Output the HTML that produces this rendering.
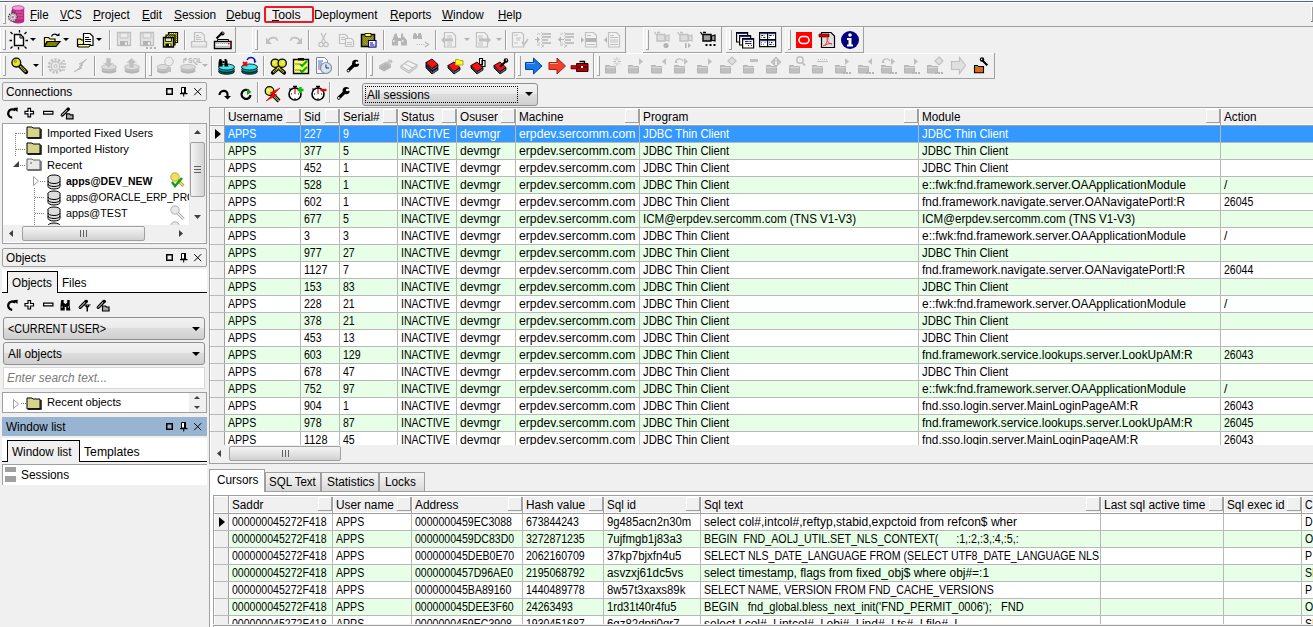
<!DOCTYPE html><html><head><meta charset="utf-8"><style>
html,body{margin:0;padding:0;}
body{width:1313px;height:627px;overflow:hidden;position:relative;background:#f0f0f0;font-family:"Liberation Sans",sans-serif;}
.t{position:absolute;white-space:pre;font-family:"Liberation Sans",sans-serif;}
.b{position:absolute;box-sizing:border-box;}
.ic{position:absolute;overflow:visible;}
.clip{position:absolute;overflow:hidden;}
u{text-decoration:none;border-bottom:1px solid #000;}
</style></head><body>
<div class="b" style="left:0px;top:0px;width:1313px;height:1px;background:#f4f6f9"></div>
<div class="b" style="left:0px;top:1px;width:1313px;height:1px;background:#5a6470"></div>
<div class="b" style="left:0px;top:2px;width:1313px;height:1px;background:#ffffff"></div>
<div class="b" style="left:3px;top:5px;width:1px;height:18px;background:#fff"></div>
<div class="b" style="left:5px;top:5px;width:1px;height:18px;background:#a0a0a0"></div>
<div class="b" style="left:3px;top:23px;width:3px;height:1px;background:#a0a0a0"></div>
<svg class="ic" style="left:7px;top:5px;width:19px;height:18px" viewBox="0 0 19 18"><path d="M5 3v13a6 2.5 0 0 0 12.2 0V3z" fill="#c02880"/><ellipse cx="11.1" cy="3" rx="6.1" ry="2.3" fill="#e8a0d8" stroke="#b02070" stroke-width=".6"/><path d="M9 7h7M9 10h7M9 13h7" stroke="#e060b0" stroke-width="1"/><path d="M5 5v11" stroke="#901060" stroke-width="1"/><circle cx="5.8" cy="12.1" r="4.2" fill="#e8e8e8" stroke="#404040" stroke-width="1.4" stroke-dasharray="1.5 1"/><circle cx="5.8" cy="12.1" r="2.8" fill="#e0e0e0" stroke="#808080" stroke-width=".6"/><circle cx="5.8" cy="12.1" r="1.2" fill="#e050a0"/></svg>
<div class="t" style="left:30px;top:7px;font-size:12px;line-height:16px;color:#000;transform:scaleX(0.961);transform-origin:0 0;">File</div>
<div class="t" style="left:60px;top:7px;font-size:12px;line-height:16px;color:#000;transform:scaleX(0.880);transform-origin:0 0;">VCS</div>
<div class="t" style="left:93px;top:7px;font-size:12px;line-height:16px;color:#000;transform:scaleX(0.982);transform-origin:0 0;">Project</div>
<div class="t" style="left:142px;top:7px;font-size:12px;line-height:16px;color:#000;transform:scaleX(0.960);transform-origin:0 0;">Edit</div>
<div class="t" style="left:174px;top:7px;font-size:12px;line-height:16px;color:#000;transform:scaleX(0.986);transform-origin:0 0;">Session</div>
<div class="t" style="left:226px;top:7px;font-size:12px;line-height:16px;color:#000;transform:scaleX(0.978);transform-origin:0 0;">Debug</div>
<div class="t" style="left:272px;top:7px;font-size:12px;line-height:16px;color:#000;transform:scaleX(1.024);transform-origin:0 0;">Tools</div>
<div class="t" style="left:314px;top:7px;font-size:12px;line-height:16px;color:#000;transform:scaleX(0.992);transform-origin:0 0;">Deployment</div>
<div class="t" style="left:390px;top:7px;font-size:12px;line-height:16px;color:#000;transform:scaleX(0.983);transform-origin:0 0;">Reports</div>
<div class="t" style="left:442px;top:7px;font-size:12px;line-height:16px;color:#000;transform:scaleX(0.975);transform-origin:0 0;">Window</div>
<div class="t" style="left:498px;top:7px;font-size:12px;line-height:16px;color:#000;transform:scaleX(0.964);transform-origin:0 0;">Help</div>
<div class="b" style="left:30px;top:20px;width:7px;height:1px;background:#000"></div>
<div class="b" style="left:60px;top:20px;width:8px;height:1px;background:#000"></div>
<div class="b" style="left:93px;top:20px;width:8px;height:1px;background:#000"></div>
<div class="b" style="left:142px;top:20px;width:8px;height:1px;background:#000"></div>
<div class="b" style="left:174px;top:20px;width:8px;height:1px;background:#000"></div>
<div class="b" style="left:226px;top:20px;width:9px;height:1px;background:#000"></div>
<div class="b" style="left:272px;top:20px;width:7px;height:1px;background:#000"></div>
<div class="b" style="left:390px;top:20px;width:9px;height:1px;background:#000"></div>
<div class="b" style="left:442px;top:20px;width:11px;height:1px;background:#000"></div>
<div class="b" style="left:498px;top:20px;width:9px;height:1px;background:#000"></div>
<div class="b" style="left:264px;top:6px;width:50px;height:17px;border:2.6px solid #ee1822;border-radius:2px"></div>
<div class="b" style="left:1311px;top:7px;width:1px;height:14px;background:#fff"></div>
<div class="b" style="left:1312px;top:7px;width:1px;height:14px;background:#a0a0a0"></div>
<div class="b" style="left:1311px;top:21px;width:2px;height:1px;background:#808080"></div>
<div class="b" style="left:0px;top:26px;width:1313px;height:1px;background:#a0a0a0"></div>
<div class="b" style="left:0px;top:27px;width:235px;height:1px;background:#fff"></div>
<div class="b" style="left:0px;top:27px;width:1px;height:25px;background:#fff"></div>
<div class="b" style="left:0px;top:52px;width:236px;height:1px;background:#a0a0a0"></div>
<div class="b" style="left:235px;top:27px;width:1px;height:25px;background:#a0a0a0"></div>
<div class="b" style="left:252px;top:27px;width:373px;height:1px;background:#fff"></div>
<div class="b" style="left:252px;top:27px;width:1px;height:25px;background:#fff"></div>
<div class="b" style="left:252px;top:52px;width:374px;height:1px;background:#a0a0a0"></div>
<div class="b" style="left:625px;top:27px;width:1px;height:25px;background:#a0a0a0"></div>
<div class="b" style="left:643px;top:27px;width:78px;height:1px;background:#fff"></div>
<div class="b" style="left:643px;top:27px;width:1px;height:25px;background:#fff"></div>
<div class="b" style="left:643px;top:52px;width:79px;height:1px;background:#a0a0a0"></div>
<div class="b" style="left:721px;top:27px;width:1px;height:25px;background:#a0a0a0"></div>
<div class="b" style="left:726px;top:27px;width:55px;height:1px;background:#fff"></div>
<div class="b" style="left:726px;top:27px;width:1px;height:25px;background:#fff"></div>
<div class="b" style="left:726px;top:52px;width:56px;height:1px;background:#a0a0a0"></div>
<div class="b" style="left:781px;top:27px;width:1px;height:25px;background:#a0a0a0"></div>
<div class="b" style="left:785px;top:27px;width:78px;height:1px;background:#fff"></div>
<div class="b" style="left:785px;top:27px;width:1px;height:25px;background:#fff"></div>
<div class="b" style="left:785px;top:52px;width:79px;height:1px;background:#a0a0a0"></div>
<div class="b" style="left:863px;top:27px;width:1px;height:25px;background:#a0a0a0"></div>
<div class="b" style="left:3px;top:30px;width:1px;height:19px;background:#fff"></div>
<div class="b" style="left:5px;top:30px;width:1px;height:19px;background:#a0a0a0"></div>
<div class="b" style="left:3px;top:49px;width:3px;height:1px;background:#a0a0a0"></div>
<div class="b" style="left:255px;top:30px;width:1px;height:19px;background:#fff"></div>
<div class="b" style="left:257px;top:30px;width:1px;height:19px;background:#a0a0a0"></div>
<div class="b" style="left:255px;top:49px;width:3px;height:1px;background:#a0a0a0"></div>
<div class="b" style="left:646px;top:30px;width:1px;height:19px;background:#fff"></div>
<div class="b" style="left:648px;top:30px;width:1px;height:19px;background:#a0a0a0"></div>
<div class="b" style="left:646px;top:49px;width:3px;height:1px;background:#a0a0a0"></div>
<div class="b" style="left:729px;top:30px;width:1px;height:19px;background:#fff"></div>
<div class="b" style="left:731px;top:30px;width:1px;height:19px;background:#a0a0a0"></div>
<div class="b" style="left:729px;top:49px;width:3px;height:1px;background:#a0a0a0"></div>
<div class="b" style="left:788px;top:30px;width:1px;height:19px;background:#fff"></div>
<div class="b" style="left:790px;top:30px;width:1px;height:19px;background:#a0a0a0"></div>
<div class="b" style="left:788px;top:49px;width:3px;height:1px;background:#a0a0a0"></div>
<div class="b" style="left:109px;top:30px;width:1px;height:20px;background:#a0a0a0"></div>
<div class="b" style="left:110px;top:30px;width:1px;height:20px;background:#fff"></div>
<div class="b" style="left:184px;top:30px;width:1px;height:20px;background:#a0a0a0"></div>
<div class="b" style="left:185px;top:30px;width:1px;height:20px;background:#fff"></div>
<div class="b" style="left:308px;top:30px;width:1px;height:20px;background:#a0a0a0"></div>
<div class="b" style="left:309px;top:30px;width:1px;height:20px;background:#fff"></div>
<div class="b" style="left:383px;top:30px;width:1px;height:20px;background:#a0a0a0"></div>
<div class="b" style="left:384px;top:30px;width:1px;height:20px;background:#fff"></div>
<div class="b" style="left:435px;top:30px;width:1px;height:20px;background:#a0a0a0"></div>
<div class="b" style="left:436px;top:30px;width:1px;height:20px;background:#fff"></div>
<div class="b" style="left:505px;top:30px;width:1px;height:20px;background:#a0a0a0"></div>
<div class="b" style="left:506px;top:30px;width:1px;height:20px;background:#fff"></div>
<div class="b" style="left:0px;top:53px;width:145px;height:1px;background:#fff"></div>
<div class="b" style="left:0px;top:53px;width:1px;height:25px;background:#fff"></div>
<div class="b" style="left:0px;top:78px;width:146px;height:1px;background:#a0a0a0"></div>
<div class="b" style="left:145px;top:53px;width:1px;height:25px;background:#a0a0a0"></div>
<div class="b" style="left:146px;top:53px;width:220px;height:1px;background:#fff"></div>
<div class="b" style="left:146px;top:53px;width:1px;height:25px;background:#fff"></div>
<div class="b" style="left:146px;top:78px;width:221px;height:1px;background:#a0a0a0"></div>
<div class="b" style="left:366px;top:53px;width:1px;height:25px;background:#a0a0a0"></div>
<div class="b" style="left:367px;top:53px;width:147px;height:1px;background:#fff"></div>
<div class="b" style="left:367px;top:53px;width:1px;height:25px;background:#fff"></div>
<div class="b" style="left:367px;top:78px;width:148px;height:1px;background:#a0a0a0"></div>
<div class="b" style="left:514px;top:53px;width:1px;height:25px;background:#a0a0a0"></div>
<div class="b" style="left:516px;top:53px;width:77px;height:1px;background:#fff"></div>
<div class="b" style="left:516px;top:53px;width:1px;height:25px;background:#fff"></div>
<div class="b" style="left:516px;top:78px;width:78px;height:1px;background:#a0a0a0"></div>
<div class="b" style="left:593px;top:53px;width:1px;height:25px;background:#a0a0a0"></div>
<div class="b" style="left:594px;top:53px;width:400px;height:1px;background:#fff"></div>
<div class="b" style="left:594px;top:53px;width:1px;height:25px;background:#fff"></div>
<div class="b" style="left:594px;top:78px;width:401px;height:1px;background:#a0a0a0"></div>
<div class="b" style="left:994px;top:53px;width:1px;height:25px;background:#a0a0a0"></div>
<div class="b" style="left:3px;top:56px;width:1px;height:19px;background:#fff"></div>
<div class="b" style="left:5px;top:56px;width:1px;height:19px;background:#a0a0a0"></div>
<div class="b" style="left:3px;top:75px;width:3px;height:1px;background:#a0a0a0"></div>
<div class="b" style="left:149px;top:56px;width:1px;height:19px;background:#fff"></div>
<div class="b" style="left:151px;top:56px;width:1px;height:19px;background:#a0a0a0"></div>
<div class="b" style="left:149px;top:75px;width:3px;height:1px;background:#a0a0a0"></div>
<div class="b" style="left:370px;top:56px;width:1px;height:19px;background:#fff"></div>
<div class="b" style="left:372px;top:56px;width:1px;height:19px;background:#a0a0a0"></div>
<div class="b" style="left:370px;top:75px;width:3px;height:1px;background:#a0a0a0"></div>
<div class="b" style="left:518px;top:56px;width:1px;height:19px;background:#fff"></div>
<div class="b" style="left:520px;top:56px;width:1px;height:19px;background:#a0a0a0"></div>
<div class="b" style="left:518px;top:75px;width:3px;height:1px;background:#a0a0a0"></div>
<div class="b" style="left:597px;top:56px;width:1px;height:19px;background:#fff"></div>
<div class="b" style="left:599px;top:56px;width:1px;height:19px;background:#a0a0a0"></div>
<div class="b" style="left:597px;top:75px;width:3px;height:1px;background:#a0a0a0"></div>
<div class="b" style="left:42px;top:56px;width:1px;height:20px;background:#a0a0a0"></div>
<div class="b" style="left:43px;top:56px;width:1px;height:20px;background:#fff"></div>
<div class="b" style="left:94px;top:56px;width:1px;height:20px;background:#a0a0a0"></div>
<div class="b" style="left:95px;top:56px;width:1px;height:20px;background:#fff"></div>
<div class="b" style="left:211px;top:56px;width:1px;height:20px;background:#a0a0a0"></div>
<div class="b" style="left:212px;top:56px;width:1px;height:20px;background:#fff"></div>
<div class="b" style="left:263px;top:56px;width:1px;height:20px;background:#a0a0a0"></div>
<div class="b" style="left:264px;top:56px;width:1px;height:20px;background:#fff"></div>
<div class="b" style="left:338px;top:56px;width:1px;height:20px;background:#a0a0a0"></div>
<div class="b" style="left:339px;top:56px;width:1px;height:20px;background:#fff"></div>
<div class="b" style="left:2px;top:82px;width:205px;height:19px;border:1px solid #a0a0a0;border-radius:2px;background:#f0f0f0"></div>
<div class="t" style="left:6px;top:84px;font-size:12px;line-height:16px;color:#000;transform:scaleX(0.993);transform-origin:0 0;">Connections</div>
<svg class="ic" style="left:160px;top:82px;width:50px;height:19px" viewBox="0 0 50 19"><rect x="6.75" y="6.75" width="5.5" height="5.5" fill="none" stroke="#000" stroke-width="1.5"/><path d="M21.5 5.5h4v5.5h-4z" fill="#fff" stroke="#000"/><path d="M24 5h2v6.5h-2z" fill="#000"/><path d="M20 11.6h7.5" stroke="#000" stroke-width="1.3"/><path d="M23.7 12v2.5" stroke="#000" stroke-width="1"/><path d="M34.2 6.2l7 7M41.2 6.2l-7 7" stroke="#000" stroke-width="1"/></svg>
<div class="b" style="left:2px;top:123px;width:205px;height:121px;border:1px solid #a0a0a0;background:#fff"></div>
<div class="clip" style="left:3px;top:124px;width:186px;height:102px">
<div class="b" style="left:12px;top:9px;width:1px;height:23px;background:repeating-linear-gradient(180deg,#808080 0 1px,transparent 1px 2px)"></div>
<div class="b" style="left:13px;top:9px;width:10px;height:1px;background:repeating-linear-gradient(90deg,#808080 0 1px,transparent 1px 2px)"></div>
<div class="b" style="left:13px;top:25px;width:10px;height:1px;background:repeating-linear-gradient(90deg,#808080 0 1px,transparent 1px 2px)"></div>
<svg class="ic" style="left:23px;top:0px;width:16px;height:16px" viewBox="0 0 16 16"><path d="M1 3h5l1 1h7v10H1z" fill="#d4d48c" stroke="#000" stroke-width="1"/><path d="M2 14h13V5" fill="none" stroke="#000" stroke-width="1.4"/></svg>
<div class="t" style="left:44px;top:2px;font-size:11.3px;line-height:15px;color:#000;transform:scaleX(0.983);transform-origin:0 0;">Imported Fixed Users</div>
<svg class="ic" style="left:23px;top:16px;width:16px;height:16px" viewBox="0 0 16 16"><path d="M1 3h5l1 1h7v10H1z" fill="#d4d48c" stroke="#000" stroke-width="1"/><path d="M2 14h13V5" fill="none" stroke="#000" stroke-width="1.4"/></svg>
<div class="t" style="left:44px;top:18px;font-size:11.3px;line-height:15px;color:#000;transform:scaleX(0.989);transform-origin:0 0;">Imported History</div>
<svg class="ic" style="left:10px;top:37px;width:6px;height:6px" viewBox="0 0 6 6"><path d="M6 0v6H0z" fill="#404040"/></svg>
<div class="b" style="left:17px;top:41px;width:6px;height:1px;background:repeating-linear-gradient(90deg,#808080 0 1px,transparent 1px 2px)"></div>
<svg class="ic" style="left:23px;top:32px;width:16px;height:16px" viewBox="0 0 16 16"><path d="M1 3h5l1 1h7v10H1z" fill="#e8e8e8" stroke="#606060" stroke-width="1"/><path d="M2 14h13V5" fill="none" stroke="#606060" stroke-width="1.4"/><path d="M4 6l2 2M6 6L4 8" stroke="#888" stroke-width=".7"/></svg>
<div class="t" style="left:44px;top:34px;font-size:11.3px;line-height:15px;color:#000;transform:scaleX(0.980);transform-origin:0 0;">Recent</div>
<svg class="ic" style="left:30px;top:52px;width:6px;height:10px" viewBox="0 0 6 10"><path d="M0.5 0.5l5 4.5-5 4.5z" fill="#fff" stroke="#a0a0a0"/></svg>
<div class="b" style="left:37px;top:57px;width:5px;height:1px;background:repeating-linear-gradient(90deg,#808080 0 1px,transparent 1px 2px)"></div>
<svg class="ic" style="left:44px;top:50px;width:14px;height:16px" viewBox="0 0 14 16"><ellipse cx="7" cy="3.5" rx="6" ry="2.5" fill="#ddd" stroke="#000"/><path d="M1 3.5v9a6 2.5 0 0 0 12 0v-9" fill="#ddd" stroke="#000"/><path d="M1 7a6 2.5 0 0 0 12 0M1 10a6 2.5 0 0 0 12 0" fill="none" stroke="#000"/></svg>
<div class="t" style="left:63px;top:50px;font-size:11.3px;line-height:15px;color:#000;font-weight:bold;transform:scaleX(0.926);transform-origin:0 0;">apps@DEV_NEW</div>
<div class="b" style="left:31px;top:64px;width:1px;height:40px;background:repeating-linear-gradient(180deg,#808080 0 1px,transparent 1px 2px)"></div>
<div class="b" style="left:32px;top:73px;width:10px;height:1px;background:repeating-linear-gradient(90deg,#808080 0 1px,transparent 1px 2px)"></div>
<svg class="ic" style="left:44px;top:66px;width:14px;height:16px" viewBox="0 0 14 16"><ellipse cx="7" cy="3.5" rx="6" ry="2.5" fill="#ddd" stroke="#000"/><path d="M1 3.5v9a6 2.5 0 0 0 12 0v-9" fill="#ddd" stroke="#000"/><path d="M1 7a6 2.5 0 0 0 12 0M1 10a6 2.5 0 0 0 12 0" fill="none" stroke="#000"/></svg>
<div class="t" style="left:63px;top:66px;font-size:11.3px;line-height:15px;color:#000;transform:scaleX(0.904);transform-origin:0 0;">apps@ORACLE_ERP_PROD</div>
<div class="b" style="left:32px;top:89px;width:10px;height:1px;background:repeating-linear-gradient(90deg,#808080 0 1px,transparent 1px 2px)"></div>
<svg class="ic" style="left:44px;top:82px;width:14px;height:16px" viewBox="0 0 14 16"><ellipse cx="7" cy="3.5" rx="6" ry="2.5" fill="#ddd" stroke="#000"/><path d="M1 3.5v9a6 2.5 0 0 0 12 0v-9" fill="#ddd" stroke="#000"/><path d="M1 7a6 2.5 0 0 0 12 0M1 10a6 2.5 0 0 0 12 0" fill="none" stroke="#000"/></svg>
<div class="t" style="left:63px;top:82px;font-size:11.3px;line-height:15px;color:#000;transform:scaleX(0.950);transform-origin:0 0;">apps@TEST</div>
<svg class="ic" style="left:44px;top:98px;width:14px;height:16px" viewBox="0 0 14 16"><ellipse cx="7" cy="3.5" rx="6" ry="2.5" fill="#ddd" stroke="#000"/><path d="M1 3.5v9a6 2.5 0 0 0 12 0v-9" fill="#ddd" stroke="#000"/><path d="M1 7a6 2.5 0 0 0 12 0M1 10a6 2.5 0 0 0 12 0" fill="none" stroke="#000"/></svg>
<svg class="ic" style="left:167px;top:48px;width:16px;height:16px" viewBox="0 0 16 16"><circle cx="5" cy="5" r="4.2" fill="#f0e060" stroke="#b09020" stroke-width=".8"/><path d="M7.5 8l6 6" stroke="#b09020" stroke-width="3"/><path d="M7.5 8l6 6" stroke="#f0e060" stroke-width="1.6"/><path d="M2 10l3 4 7-8" fill="none" stroke="#10a010" stroke-width="2.4"/></svg>
<svg class="ic" style="left:167px;top:81px;width:16px;height:16px" viewBox="0 0 16 16"><circle cx="5" cy="5" r="4.2" fill="#e8e8e8" stroke="#a0a0a0" stroke-width=".8"/><path d="M7.5 8l6 6" stroke="#a0a0a0" stroke-width="3"/><path d="M7.5 8l6 6" stroke="#e8e8e8" stroke-width="1.6"/></svg>
<svg class="ic" style="left:167px;top:97px;width:16px;height:16px" viewBox="0 0 16 16"><circle cx="5" cy="5" r="4.2" fill="#e8e8e8" stroke="#a0a0a0" stroke-width=".8"/></svg>
</div>
<div class="b" style="left:189px;top:124px;width:17px;height:101px;background:#f0f0f0;border-left:1px solid #e8e8e8"></div>
<svg class="ic" style="left:194px;top:130px;width:7px;height:4px" viewBox="0 0 7 4"><path d="M3.5 0L7 4H0z" fill="#404040"/></svg>
<svg class="ic" style="left:194px;top:215px;width:7px;height:4px" viewBox="0 0 7 4"><path d="M0 0h7L3.5 4z" fill="#404040"/></svg>
<div class="b" style="left:190px;top:142px;width:15px;height:55px;border:1px solid #a0a0a0;border-radius:2px;background:linear-gradient(90deg,#f4f4f4,#e0e0e0 60%,#d4d4d4)"></div>
<div class="b" style="left:194px;top:166px;width:7px;height:1px;background:#606060"></div>
<div class="b" style="left:194px;top:169px;width:7px;height:1px;background:#606060"></div>
<div class="b" style="left:194px;top:172px;width:7px;height:1px;background:#606060"></div>
<div class="b" style="left:3px;top:225px;width:186px;height:17px;background:#f0f0f0"></div>
<svg class="ic" style="left:9px;top:230px;width:4px;height:7px" viewBox="0 0 4 7"><path d="M0 3.5L4 0v7z" fill="#404040"/></svg>
<svg class="ic" style="left:179px;top:230px;width:4px;height:7px" viewBox="0 0 4 7"><path d="M4 3.5L0 0v7z" fill="#404040"/></svg>
<div class="b" style="left:22px;top:226px;width:123px;height:15px;border:1px solid #a0a0a0;border-radius:2px;background:linear-gradient(180deg,#f4f4f4,#e0e0e0 60%,#d0d0d0)"></div>
<div class="b" style="left:80px;top:230px;width:1px;height:7px;background:#606060"></div>
<div class="b" style="left:83px;top:230px;width:1px;height:7px;background:#606060"></div>
<div class="b" style="left:86px;top:230px;width:1px;height:7px;background:#606060"></div>
<div class="b" style="left:189px;top:225px;width:17px;height:17px;background:#f0f0f0"></div>
<div class="b" style="left:2px;top:248px;width:205px;height:19px;border:1px solid #a0a0a0;border-radius:2px;background:#f0f0f0"></div>
<div class="t" style="left:6px;top:250px;font-size:12px;line-height:16px;color:#000;transform:scaleX(0.980);transform-origin:0 0;">Objects</div>
<svg class="ic" style="left:160px;top:248px;width:50px;height:19px" viewBox="0 0 50 19"><rect x="6.75" y="6.75" width="5.5" height="5.5" fill="none" stroke="#000" stroke-width="1.5"/><path d="M21.5 5.5h4v5.5h-4z" fill="#fff" stroke="#000"/><path d="M24 5h2v6.5h-2z" fill="#000"/><path d="M20 11.6h7.5" stroke="#000" stroke-width="1.3"/><path d="M23.7 12v2.5" stroke="#000" stroke-width="1"/><path d="M34.2 6.2l7 7M41.2 6.2l-7 7" stroke="#000" stroke-width="1"/></svg>
<div class="b" style="left:2px;top:269px;width:205px;height:24px;background:#fff"></div>
<div class="b" style="left:2px;top:292px;width:205px;height:1px;background:#000"></div>
<div class="b" style="left:7px;top:271px;width:51px;height:22px;border:1px solid #000;border-bottom:none;background:#f0f0f0"></div>
<div class="t" style="left:12px;top:275px;font-size:12px;line-height:16px;color:#000;transform:scaleX(0.980);transform-origin:0 0;">Objects</div>
<div class="t" style="left:62px;top:275px;font-size:12px;line-height:16px;color:#000;transform:scaleX(0.972);transform-origin:0 0;">Files</div>
<div class="b" style="left:3px;top:317px;width:202px;height:23px;border:1px solid #8e8f8f;border-radius:3px;background:linear-gradient(180deg,#f2f2f2 0%,#ebebeb 45%,#dddddd 50%,#cfcfcf 100%)"></div>
<div class="t" style="left:8px;top:321px;font-size:12px;line-height:16px;color:#000;transform:scaleX(0.898);transform-origin:0 0;">&lt;CURRENT USER&gt;</div>
<svg class="ic" style="left:192px;top:327px;width:8px;height:4px" viewBox="0 0 8 4"><path d="M0 0h8L4 4z" fill="#000"/></svg>
<div class="b" style="left:3px;top:342px;width:202px;height:23px;border:1px solid #8e8f8f;border-radius:3px;background:linear-gradient(180deg,#f2f2f2 0%,#ebebeb 45%,#dddddd 50%,#cfcfcf 100%)"></div>
<div class="t" style="left:8px;top:346px;font-size:12px;line-height:16px;color:#000;transform:scaleX(0.985);transform-origin:0 0;">All objects</div>
<svg class="ic" style="left:192px;top:352px;width:8px;height:4px" viewBox="0 0 8 4"><path d="M0 0h8L4 4z" fill="#000"/></svg>
<div class="b" style="left:3px;top:367px;width:202px;height:22px;border:1px solid #d8d8d8;background:#fff"></div>
<div class="t" style="left:7px;top:370px;font-size:12px;line-height:16px;color:#7a7a7a;font-style:italic;transform:scaleX(0.993);transform-origin:0 0;">Enter search text...</div>
<div class="b" style="left:2px;top:392px;width:205px;height:21px;border:1px solid #a0a0a0;background:#fff"></div>
<svg class="ic" style="left:13px;top:399px;width:6px;height:10px" viewBox="0 0 6 10"><path d="M0.5 0.5l5 4.5-5 4.5z" fill="#fff" stroke="#a0a0a0"/></svg>
<div class="b" style="left:21px;top:403px;width:5px;height:1px;background:repeating-linear-gradient(90deg,#808080 0 1px,transparent 1px 2px)"></div>
<svg class="ic" style="left:26px;top:395px;width:16px;height:16px" viewBox="0 0 16 16"><path d="M1 3h5l1 1h7v10H1z" fill="#d4d48c" stroke="#000" stroke-width="1"/><path d="M2 14h13V5" fill="none" stroke="#000" stroke-width="1.4"/></svg>
<div class="t" style="left:47px;top:395px;font-size:11.3px;line-height:15px;color:#000;transform:scaleX(0.992);transform-origin:0 0;">Recent objects</div>
<div class="b" style="left:189px;top:393px;width:17px;height:19px;background:#f0f0f0"></div>
<svg class="ic" style="left:194px;top:396px;width:6px;height:3px" viewBox="0 0 6 3"><path d="M3 0L6 3H0z" fill="#404040"/></svg>
<svg class="ic" style="left:194px;top:406px;width:6px;height:3px" viewBox="0 0 6 3"><path d="M0 0h6L3 3z" fill="#404040"/></svg>
<div class="b" style="left:2px;top:417px;width:205px;height:19px;background:#99b4d1"></div>
<div class="t" style="left:6px;top:419px;font-size:12px;line-height:16px;color:#000;transform:scaleX(0.981);transform-origin:0 0;">Window list</div>
<svg class="ic" style="left:160px;top:417px;width:50px;height:19px" viewBox="0 0 50 19"><rect x="6.75" y="6.75" width="5.5" height="5.5" fill="none" stroke="#000" stroke-width="1.5"/><path d="M21.5 5.5h4v5.5h-4z" fill="#fff" stroke="#000"/><path d="M24 5h2v6.5h-2z" fill="#000"/><path d="M20 11.6h7.5" stroke="#000" stroke-width="1.3"/><path d="M23.7 12v2.5" stroke="#000" stroke-width="1"/><path d="M34.2 6.2l7 7M41.2 6.2l-7 7" stroke="#000" stroke-width="1"/></svg>
<div class="b" style="left:2px;top:438px;width:205px;height:24px;background:#fff"></div>
<div class="b" style="left:2px;top:461px;width:205px;height:1px;background:#000"></div>
<div class="b" style="left:7px;top:440px;width:73px;height:22px;border:1px solid #000;border-bottom:none;background:#f0f0f0"></div>
<div class="t" style="left:12px;top:444px;font-size:12px;line-height:16px;color:#000;transform:scaleX(0.981);transform-origin:0 0;">Window list</div>
<div class="t" style="left:84px;top:444px;font-size:12px;line-height:16px;color:#000;transform:scaleX(1.017);transform-origin:0 0;">Templates</div>
<div class="b" style="left:2px;top:464px;width:205px;height:21px;border-top:1px solid #a0a0a0;border-left:1px solid #a0a0a0;background:#fff"></div>
<div class="b" style="left:5px;top:467px;width:11px;height:5px;background:#a0a0a0"></div>
<div class="b" style="left:5px;top:476px;width:11px;height:6px;background:#a0a0a0"></div>
<div class="t" style="left:21px;top:467px;font-size:12px;line-height:16px;color:#000;transform:scaleX(0.989);transform-origin:0 0;">Sessions</div>
<div class="b" style="left:207px;top:79px;width:1px;height:548px;background:#f0f0f0"></div>
<div class="b" style="left:257px;top:82px;width:1px;height:21px;background:#a0a0a0"></div>
<div class="b" style="left:258px;top:82px;width:1px;height:21px;background:#fff"></div>
<div class="b" style="left:329px;top:82px;width:1px;height:21px;background:#a0a0a0"></div>
<div class="b" style="left:330px;top:82px;width:1px;height:21px;background:#fff"></div>
<div class="b" style="left:362px;top:83px;width:176px;height:23px;border:1px solid #8e8f8f;border-radius:3px;background:linear-gradient(180deg,#f2f2f2 0%,#ebebeb 45%,#dddddd 50%,#cfcfcf 100%)"></div>
<div class="b" style="left:365px;top:86px;width:153px;height:17px;border:1px dotted #000"></div>
<div class="t" style="left:367px;top:87px;font-size:12px;line-height:16px;color:#000;transform:scaleX(0.989);transform-origin:0 0;">All sessions</div>
<svg class="ic" style="left:525px;top:92px;width:8px;height:4px" viewBox="0 0 8 4"><path d="M0 0h8L4 4z" fill="#000"/></svg>
<div class="b" style="left:209px;top:107px;width:1104px;height:356px;border-left:1px solid #a0a0a0;border-top:1px solid #a0a0a0;background:#fff"></div>
<div class="b" style="left:210px;top:108px;width:1103px;height:17px;background:#f0f0f0"></div>
<div class="b" style="left:210px;top:108px;width:1103px;height:1px;background:#fff"></div>
<div class="b" style="left:210px;top:124px;width:1103px;height:1px;background:#fff"></div>
<div class="b" style="left:210px;top:125px;width:1103px;height:1px;background:#a0a0a0"></div>
<div class="b" style="left:224px;top:108px;width:1px;height:337px;background:#a0a0a0"></div>
<div class="clip" style="left:210px;top:126px;width:1103px;height:319px">
<div class="b" style="left:15px;top:0px;width:1089px;height:16px;background:#3399ff"></div>
<div class="b" style="left:0px;top:0px;width:14px;height:16px;background:#f0f0f0;border-left:1px solid #fff"></div>
<div class="b" style="left:0px;top:16px;width:1103px;height:1px;background:#b9b9b9"></div>
<svg class="ic" style="left:5px;top:3px;width:6px;height:10px" viewBox="0 0 6 10"><path d="M0 0l6 5-6 5z" fill="#000"/></svg>
<div class="clip" style="left:15px;top:0px;width:75px;height:16px"><div class="t" style="left:3px;top:0px;font-size:12px;line-height:16px;color:#fff;transform:scaleX(0.880);transform-origin:0 0">APPS</div></div>
<div class="clip" style="left:91px;top:0px;width:38px;height:16px"><div class="t" style="left:3px;top:0px;font-size:12px;line-height:16px;color:#fff;transform:scaleX(0.880);transform-origin:0 0">227</div></div>
<div class="clip" style="left:130px;top:0px;width:57px;height:16px"><div class="t" style="left:3px;top:0px;font-size:12px;line-height:16px;color:#fff;transform:scaleX(0.880);transform-origin:0 0">9</div></div>
<div class="clip" style="left:188px;top:0px;width:58px;height:16px"><div class="t" style="left:3px;top:0px;font-size:12px;line-height:16px;color:#fff;transform:scaleX(0.880);transform-origin:0 0">INACTIVE</div></div>
<div class="clip" style="left:247px;top:0px;width:58px;height:16px"><div class="t" style="left:3px;top:0px;font-size:12px;line-height:16px;color:#fff;transform:scaleX(1.010);transform-origin:0 0">devmgr</div></div>
<div class="clip" style="left:306px;top:0px;width:123px;height:16px"><div class="t" style="left:3px;top:0px;font-size:12px;line-height:16px;color:#fff;transform:scaleX(1.017);transform-origin:0 0">erpdev.sercomm.com</div></div>
<div class="clip" style="left:430px;top:0px;width:278px;height:16px"><div class="t" style="left:3px;top:0px;font-size:12px;line-height:16px;color:#fff;transform:scaleX(0.939);transform-origin:0 0">JDBC Thin Client</div></div>
<div class="clip" style="left:709px;top:0px;width:301px;height:16px"><div class="t" style="left:3px;top:0px;font-size:12px;line-height:16px;color:#fff;transform:scaleX(0.939);transform-origin:0 0">JDBC Thin Client</div></div>
<div class="clip" style="left:1011px;top:0px;width:492px;height:16px"><div class="t" style="left:3px;top:0px;font-size:12px;line-height:16px;color:#fff;transform:scaleX(1.000);transform-origin:0 0"></div></div>
<div class="b" style="left:15px;top:17px;width:1089px;height:16px;background:#e6ffe6"></div>
<div class="b" style="left:0px;top:17px;width:14px;height:16px;background:#f0f0f0;border-left:1px solid #fff"></div>
<div class="b" style="left:0px;top:33px;width:1103px;height:1px;background:#b9b9b9"></div>
<div class="clip" style="left:15px;top:17px;width:75px;height:16px"><div class="t" style="left:3px;top:0px;font-size:12px;line-height:16px;color:#000;transform:scaleX(0.880);transform-origin:0 0">APPS</div></div>
<div class="clip" style="left:91px;top:17px;width:38px;height:16px"><div class="t" style="left:3px;top:0px;font-size:12px;line-height:16px;color:#000;transform:scaleX(0.880);transform-origin:0 0">377</div></div>
<div class="clip" style="left:130px;top:17px;width:57px;height:16px"><div class="t" style="left:3px;top:0px;font-size:12px;line-height:16px;color:#000;transform:scaleX(0.880);transform-origin:0 0">5</div></div>
<div class="clip" style="left:188px;top:17px;width:58px;height:16px"><div class="t" style="left:3px;top:0px;font-size:12px;line-height:16px;color:#000;transform:scaleX(0.880);transform-origin:0 0">INACTIVE</div></div>
<div class="clip" style="left:247px;top:17px;width:58px;height:16px"><div class="t" style="left:3px;top:0px;font-size:12px;line-height:16px;color:#000;transform:scaleX(1.010);transform-origin:0 0">devmgr</div></div>
<div class="clip" style="left:306px;top:17px;width:123px;height:16px"><div class="t" style="left:3px;top:0px;font-size:12px;line-height:16px;color:#000;transform:scaleX(1.017);transform-origin:0 0">erpdev.sercomm.com</div></div>
<div class="clip" style="left:430px;top:17px;width:278px;height:16px"><div class="t" style="left:3px;top:0px;font-size:12px;line-height:16px;color:#000;transform:scaleX(0.939);transform-origin:0 0">JDBC Thin Client</div></div>
<div class="clip" style="left:709px;top:17px;width:301px;height:16px"><div class="t" style="left:3px;top:0px;font-size:12px;line-height:16px;color:#000;transform:scaleX(0.939);transform-origin:0 0">JDBC Thin Client</div></div>
<div class="clip" style="left:1011px;top:17px;width:492px;height:16px"><div class="t" style="left:3px;top:0px;font-size:12px;line-height:16px;color:#000;transform:scaleX(1.000);transform-origin:0 0"></div></div>
<div class="b" style="left:15px;top:34px;width:1089px;height:16px;background:#fff"></div>
<div class="b" style="left:0px;top:34px;width:14px;height:16px;background:#f0f0f0;border-left:1px solid #fff"></div>
<div class="b" style="left:0px;top:50px;width:1103px;height:1px;background:#b9b9b9"></div>
<div class="clip" style="left:15px;top:34px;width:75px;height:16px"><div class="t" style="left:3px;top:0px;font-size:12px;line-height:16px;color:#000;transform:scaleX(0.880);transform-origin:0 0">APPS</div></div>
<div class="clip" style="left:91px;top:34px;width:38px;height:16px"><div class="t" style="left:3px;top:0px;font-size:12px;line-height:16px;color:#000;transform:scaleX(0.880);transform-origin:0 0">452</div></div>
<div class="clip" style="left:130px;top:34px;width:57px;height:16px"><div class="t" style="left:3px;top:0px;font-size:12px;line-height:16px;color:#000;transform:scaleX(0.880);transform-origin:0 0">1</div></div>
<div class="clip" style="left:188px;top:34px;width:58px;height:16px"><div class="t" style="left:3px;top:0px;font-size:12px;line-height:16px;color:#000;transform:scaleX(0.880);transform-origin:0 0">INACTIVE</div></div>
<div class="clip" style="left:247px;top:34px;width:58px;height:16px"><div class="t" style="left:3px;top:0px;font-size:12px;line-height:16px;color:#000;transform:scaleX(1.010);transform-origin:0 0">devmgr</div></div>
<div class="clip" style="left:306px;top:34px;width:123px;height:16px"><div class="t" style="left:3px;top:0px;font-size:12px;line-height:16px;color:#000;transform:scaleX(1.017);transform-origin:0 0">erpdev.sercomm.com</div></div>
<div class="clip" style="left:430px;top:34px;width:278px;height:16px"><div class="t" style="left:3px;top:0px;font-size:12px;line-height:16px;color:#000;transform:scaleX(0.939);transform-origin:0 0">JDBC Thin Client</div></div>
<div class="clip" style="left:709px;top:34px;width:301px;height:16px"><div class="t" style="left:3px;top:0px;font-size:12px;line-height:16px;color:#000;transform:scaleX(0.939);transform-origin:0 0">JDBC Thin Client</div></div>
<div class="clip" style="left:1011px;top:34px;width:492px;height:16px"><div class="t" style="left:3px;top:0px;font-size:12px;line-height:16px;color:#000;transform:scaleX(1.000);transform-origin:0 0"></div></div>
<div class="b" style="left:15px;top:51px;width:1089px;height:16px;background:#e6ffe6"></div>
<div class="b" style="left:0px;top:51px;width:14px;height:16px;background:#f0f0f0;border-left:1px solid #fff"></div>
<div class="b" style="left:0px;top:67px;width:1103px;height:1px;background:#b9b9b9"></div>
<div class="clip" style="left:15px;top:51px;width:75px;height:16px"><div class="t" style="left:3px;top:0px;font-size:12px;line-height:16px;color:#000;transform:scaleX(0.880);transform-origin:0 0">APPS</div></div>
<div class="clip" style="left:91px;top:51px;width:38px;height:16px"><div class="t" style="left:3px;top:0px;font-size:12px;line-height:16px;color:#000;transform:scaleX(0.880);transform-origin:0 0">528</div></div>
<div class="clip" style="left:130px;top:51px;width:57px;height:16px"><div class="t" style="left:3px;top:0px;font-size:12px;line-height:16px;color:#000;transform:scaleX(0.880);transform-origin:0 0">1</div></div>
<div class="clip" style="left:188px;top:51px;width:58px;height:16px"><div class="t" style="left:3px;top:0px;font-size:12px;line-height:16px;color:#000;transform:scaleX(0.880);transform-origin:0 0">INACTIVE</div></div>
<div class="clip" style="left:247px;top:51px;width:58px;height:16px"><div class="t" style="left:3px;top:0px;font-size:12px;line-height:16px;color:#000;transform:scaleX(1.010);transform-origin:0 0">devmgr</div></div>
<div class="clip" style="left:306px;top:51px;width:123px;height:16px"><div class="t" style="left:3px;top:0px;font-size:12px;line-height:16px;color:#000;transform:scaleX(1.017);transform-origin:0 0">erpdev.sercomm.com</div></div>
<div class="clip" style="left:430px;top:51px;width:278px;height:16px"><div class="t" style="left:3px;top:0px;font-size:12px;line-height:16px;color:#000;transform:scaleX(0.939);transform-origin:0 0">JDBC Thin Client</div></div>
<div class="clip" style="left:709px;top:51px;width:301px;height:16px"><div class="t" style="left:3px;top:0px;font-size:12px;line-height:16px;color:#000;transform:scaleX(0.994);transform-origin:0 0">e::fwk:fnd.framework.server.OAApplicationModule</div></div>
<div class="clip" style="left:1011px;top:51px;width:492px;height:16px"><div class="t" style="left:3px;top:0px;font-size:12px;line-height:16px;color:#000;transform:scaleX(1.000);transform-origin:0 0">/</div></div>
<div class="b" style="left:15px;top:68px;width:1089px;height:16px;background:#fff"></div>
<div class="b" style="left:0px;top:68px;width:14px;height:16px;background:#f0f0f0;border-left:1px solid #fff"></div>
<div class="b" style="left:0px;top:84px;width:1103px;height:1px;background:#b9b9b9"></div>
<div class="clip" style="left:15px;top:68px;width:75px;height:16px"><div class="t" style="left:3px;top:0px;font-size:12px;line-height:16px;color:#000;transform:scaleX(0.880);transform-origin:0 0">APPS</div></div>
<div class="clip" style="left:91px;top:68px;width:38px;height:16px"><div class="t" style="left:3px;top:0px;font-size:12px;line-height:16px;color:#000;transform:scaleX(0.880);transform-origin:0 0">602</div></div>
<div class="clip" style="left:130px;top:68px;width:57px;height:16px"><div class="t" style="left:3px;top:0px;font-size:12px;line-height:16px;color:#000;transform:scaleX(0.880);transform-origin:0 0">1</div></div>
<div class="clip" style="left:188px;top:68px;width:58px;height:16px"><div class="t" style="left:3px;top:0px;font-size:12px;line-height:16px;color:#000;transform:scaleX(0.880);transform-origin:0 0">INACTIVE</div></div>
<div class="clip" style="left:247px;top:68px;width:58px;height:16px"><div class="t" style="left:3px;top:0px;font-size:12px;line-height:16px;color:#000;transform:scaleX(1.010);transform-origin:0 0">devmgr</div></div>
<div class="clip" style="left:306px;top:68px;width:123px;height:16px"><div class="t" style="left:3px;top:0px;font-size:12px;line-height:16px;color:#000;transform:scaleX(1.017);transform-origin:0 0">erpdev.sercomm.com</div></div>
<div class="clip" style="left:430px;top:68px;width:278px;height:16px"><div class="t" style="left:3px;top:0px;font-size:12px;line-height:16px;color:#000;transform:scaleX(0.939);transform-origin:0 0">JDBC Thin Client</div></div>
<div class="clip" style="left:709px;top:68px;width:301px;height:16px"><div class="t" style="left:3px;top:0px;font-size:12px;line-height:16px;color:#000;transform:scaleX(0.991);transform-origin:0 0">fnd.framework.navigate.server.OANavigatePortl:R</div></div>
<div class="clip" style="left:1011px;top:68px;width:492px;height:16px"><div class="t" style="left:3px;top:0px;font-size:12px;line-height:16px;color:#000;transform:scaleX(0.880);transform-origin:0 0">26045</div></div>
<div class="b" style="left:15px;top:85px;width:1089px;height:16px;background:#e6ffe6"></div>
<div class="b" style="left:0px;top:85px;width:14px;height:16px;background:#f0f0f0;border-left:1px solid #fff"></div>
<div class="b" style="left:0px;top:101px;width:1103px;height:1px;background:#b9b9b9"></div>
<div class="clip" style="left:15px;top:85px;width:75px;height:16px"><div class="t" style="left:3px;top:0px;font-size:12px;line-height:16px;color:#000;transform:scaleX(0.880);transform-origin:0 0">APPS</div></div>
<div class="clip" style="left:91px;top:85px;width:38px;height:16px"><div class="t" style="left:3px;top:0px;font-size:12px;line-height:16px;color:#000;transform:scaleX(0.880);transform-origin:0 0">677</div></div>
<div class="clip" style="left:130px;top:85px;width:57px;height:16px"><div class="t" style="left:3px;top:0px;font-size:12px;line-height:16px;color:#000;transform:scaleX(0.880);transform-origin:0 0">5</div></div>
<div class="clip" style="left:188px;top:85px;width:58px;height:16px"><div class="t" style="left:3px;top:0px;font-size:12px;line-height:16px;color:#000;transform:scaleX(0.880);transform-origin:0 0">INACTIVE</div></div>
<div class="clip" style="left:247px;top:85px;width:58px;height:16px"><div class="t" style="left:3px;top:0px;font-size:12px;line-height:16px;color:#000;transform:scaleX(1.010);transform-origin:0 0">devmgr</div></div>
<div class="clip" style="left:306px;top:85px;width:123px;height:16px"><div class="t" style="left:3px;top:0px;font-size:12px;line-height:16px;color:#000;transform:scaleX(1.017);transform-origin:0 0">erpdev.sercomm.com</div></div>
<div class="clip" style="left:430px;top:85px;width:278px;height:16px"><div class="t" style="left:3px;top:0px;font-size:12px;line-height:16px;color:#000;transform:scaleX(0.966);transform-origin:0 0">ICM@erpdev.sercomm.com (TNS V1-V3)</div></div>
<div class="clip" style="left:709px;top:85px;width:301px;height:16px"><div class="t" style="left:3px;top:0px;font-size:12px;line-height:16px;color:#000;transform:scaleX(0.966);transform-origin:0 0">ICM@erpdev.sercomm.com (TNS V1-V3)</div></div>
<div class="clip" style="left:1011px;top:85px;width:492px;height:16px"><div class="t" style="left:3px;top:0px;font-size:12px;line-height:16px;color:#000;transform:scaleX(1.000);transform-origin:0 0"></div></div>
<div class="b" style="left:15px;top:102px;width:1089px;height:16px;background:#fff"></div>
<div class="b" style="left:0px;top:102px;width:14px;height:16px;background:#f0f0f0;border-left:1px solid #fff"></div>
<div class="b" style="left:0px;top:118px;width:1103px;height:1px;background:#b9b9b9"></div>
<div class="clip" style="left:15px;top:102px;width:75px;height:16px"><div class="t" style="left:3px;top:0px;font-size:12px;line-height:16px;color:#000;transform:scaleX(0.880);transform-origin:0 0">APPS</div></div>
<div class="clip" style="left:91px;top:102px;width:38px;height:16px"><div class="t" style="left:3px;top:0px;font-size:12px;line-height:16px;color:#000;transform:scaleX(0.880);transform-origin:0 0">3</div></div>
<div class="clip" style="left:130px;top:102px;width:57px;height:16px"><div class="t" style="left:3px;top:0px;font-size:12px;line-height:16px;color:#000;transform:scaleX(0.880);transform-origin:0 0">3</div></div>
<div class="clip" style="left:188px;top:102px;width:58px;height:16px"><div class="t" style="left:3px;top:0px;font-size:12px;line-height:16px;color:#000;transform:scaleX(0.880);transform-origin:0 0">INACTIVE</div></div>
<div class="clip" style="left:247px;top:102px;width:58px;height:16px"><div class="t" style="left:3px;top:0px;font-size:12px;line-height:16px;color:#000;transform:scaleX(1.010);transform-origin:0 0">devmgr</div></div>
<div class="clip" style="left:306px;top:102px;width:123px;height:16px"><div class="t" style="left:3px;top:0px;font-size:12px;line-height:16px;color:#000;transform:scaleX(1.017);transform-origin:0 0">erpdev.sercomm.com</div></div>
<div class="clip" style="left:430px;top:102px;width:278px;height:16px"><div class="t" style="left:3px;top:0px;font-size:12px;line-height:16px;color:#000;transform:scaleX(0.939);transform-origin:0 0">JDBC Thin Client</div></div>
<div class="clip" style="left:709px;top:102px;width:301px;height:16px"><div class="t" style="left:3px;top:0px;font-size:12px;line-height:16px;color:#000;transform:scaleX(0.994);transform-origin:0 0">e::fwk:fnd.framework.server.OAApplicationModule</div></div>
<div class="clip" style="left:1011px;top:102px;width:492px;height:16px"><div class="t" style="left:3px;top:0px;font-size:12px;line-height:16px;color:#000;transform:scaleX(1.000);transform-origin:0 0">/</div></div>
<div class="b" style="left:15px;top:119px;width:1089px;height:16px;background:#e6ffe6"></div>
<div class="b" style="left:0px;top:119px;width:14px;height:16px;background:#f0f0f0;border-left:1px solid #fff"></div>
<div class="b" style="left:0px;top:135px;width:1103px;height:1px;background:#b9b9b9"></div>
<div class="clip" style="left:15px;top:119px;width:75px;height:16px"><div class="t" style="left:3px;top:0px;font-size:12px;line-height:16px;color:#000;transform:scaleX(0.880);transform-origin:0 0">APPS</div></div>
<div class="clip" style="left:91px;top:119px;width:38px;height:16px"><div class="t" style="left:3px;top:0px;font-size:12px;line-height:16px;color:#000;transform:scaleX(0.880);transform-origin:0 0">977</div></div>
<div class="clip" style="left:130px;top:119px;width:57px;height:16px"><div class="t" style="left:3px;top:0px;font-size:12px;line-height:16px;color:#000;transform:scaleX(0.880);transform-origin:0 0">27</div></div>
<div class="clip" style="left:188px;top:119px;width:58px;height:16px"><div class="t" style="left:3px;top:0px;font-size:12px;line-height:16px;color:#000;transform:scaleX(0.880);transform-origin:0 0">INACTIVE</div></div>
<div class="clip" style="left:247px;top:119px;width:58px;height:16px"><div class="t" style="left:3px;top:0px;font-size:12px;line-height:16px;color:#000;transform:scaleX(1.010);transform-origin:0 0">devmgr</div></div>
<div class="clip" style="left:306px;top:119px;width:123px;height:16px"><div class="t" style="left:3px;top:0px;font-size:12px;line-height:16px;color:#000;transform:scaleX(1.017);transform-origin:0 0">erpdev.sercomm.com</div></div>
<div class="clip" style="left:430px;top:119px;width:278px;height:16px"><div class="t" style="left:3px;top:0px;font-size:12px;line-height:16px;color:#000;transform:scaleX(0.939);transform-origin:0 0">JDBC Thin Client</div></div>
<div class="clip" style="left:709px;top:119px;width:301px;height:16px"><div class="t" style="left:3px;top:0px;font-size:12px;line-height:16px;color:#000;transform:scaleX(0.939);transform-origin:0 0">JDBC Thin Client</div></div>
<div class="clip" style="left:1011px;top:119px;width:492px;height:16px"><div class="t" style="left:3px;top:0px;font-size:12px;line-height:16px;color:#000;transform:scaleX(1.000);transform-origin:0 0"></div></div>
<div class="b" style="left:15px;top:136px;width:1089px;height:16px;background:#fff"></div>
<div class="b" style="left:0px;top:136px;width:14px;height:16px;background:#f0f0f0;border-left:1px solid #fff"></div>
<div class="b" style="left:0px;top:152px;width:1103px;height:1px;background:#b9b9b9"></div>
<div class="clip" style="left:15px;top:136px;width:75px;height:16px"><div class="t" style="left:3px;top:0px;font-size:12px;line-height:16px;color:#000;transform:scaleX(0.880);transform-origin:0 0">APPS</div></div>
<div class="clip" style="left:91px;top:136px;width:38px;height:16px"><div class="t" style="left:3px;top:0px;font-size:12px;line-height:16px;color:#000;transform:scaleX(0.910);transform-origin:0 0">1127</div></div>
<div class="clip" style="left:130px;top:136px;width:57px;height:16px"><div class="t" style="left:3px;top:0px;font-size:12px;line-height:16px;color:#000;transform:scaleX(0.880);transform-origin:0 0">7</div></div>
<div class="clip" style="left:188px;top:136px;width:58px;height:16px"><div class="t" style="left:3px;top:0px;font-size:12px;line-height:16px;color:#000;transform:scaleX(0.880);transform-origin:0 0">INACTIVE</div></div>
<div class="clip" style="left:247px;top:136px;width:58px;height:16px"><div class="t" style="left:3px;top:0px;font-size:12px;line-height:16px;color:#000;transform:scaleX(1.010);transform-origin:0 0">devmgr</div></div>
<div class="clip" style="left:306px;top:136px;width:123px;height:16px"><div class="t" style="left:3px;top:0px;font-size:12px;line-height:16px;color:#000;transform:scaleX(1.017);transform-origin:0 0">erpdev.sercomm.com</div></div>
<div class="clip" style="left:430px;top:136px;width:278px;height:16px"><div class="t" style="left:3px;top:0px;font-size:12px;line-height:16px;color:#000;transform:scaleX(0.939);transform-origin:0 0">JDBC Thin Client</div></div>
<div class="clip" style="left:709px;top:136px;width:301px;height:16px"><div class="t" style="left:3px;top:0px;font-size:12px;line-height:16px;color:#000;transform:scaleX(0.991);transform-origin:0 0">fnd.framework.navigate.server.OANavigatePortl:R</div></div>
<div class="clip" style="left:1011px;top:136px;width:492px;height:16px"><div class="t" style="left:3px;top:0px;font-size:12px;line-height:16px;color:#000;transform:scaleX(0.880);transform-origin:0 0">26044</div></div>
<div class="b" style="left:15px;top:153px;width:1089px;height:16px;background:#e6ffe6"></div>
<div class="b" style="left:0px;top:153px;width:14px;height:16px;background:#f0f0f0;border-left:1px solid #fff"></div>
<div class="b" style="left:0px;top:169px;width:1103px;height:1px;background:#b9b9b9"></div>
<div class="clip" style="left:15px;top:153px;width:75px;height:16px"><div class="t" style="left:3px;top:0px;font-size:12px;line-height:16px;color:#000;transform:scaleX(0.880);transform-origin:0 0">APPS</div></div>
<div class="clip" style="left:91px;top:153px;width:38px;height:16px"><div class="t" style="left:3px;top:0px;font-size:12px;line-height:16px;color:#000;transform:scaleX(0.880);transform-origin:0 0">153</div></div>
<div class="clip" style="left:130px;top:153px;width:57px;height:16px"><div class="t" style="left:3px;top:0px;font-size:12px;line-height:16px;color:#000;transform:scaleX(0.880);transform-origin:0 0">83</div></div>
<div class="clip" style="left:188px;top:153px;width:58px;height:16px"><div class="t" style="left:3px;top:0px;font-size:12px;line-height:16px;color:#000;transform:scaleX(0.880);transform-origin:0 0">INACTIVE</div></div>
<div class="clip" style="left:247px;top:153px;width:58px;height:16px"><div class="t" style="left:3px;top:0px;font-size:12px;line-height:16px;color:#000;transform:scaleX(1.010);transform-origin:0 0">devmgr</div></div>
<div class="clip" style="left:306px;top:153px;width:123px;height:16px"><div class="t" style="left:3px;top:0px;font-size:12px;line-height:16px;color:#000;transform:scaleX(1.017);transform-origin:0 0">erpdev.sercomm.com</div></div>
<div class="clip" style="left:430px;top:153px;width:278px;height:16px"><div class="t" style="left:3px;top:0px;font-size:12px;line-height:16px;color:#000;transform:scaleX(0.939);transform-origin:0 0">JDBC Thin Client</div></div>
<div class="clip" style="left:709px;top:153px;width:301px;height:16px"><div class="t" style="left:3px;top:0px;font-size:12px;line-height:16px;color:#000;transform:scaleX(0.939);transform-origin:0 0">JDBC Thin Client</div></div>
<div class="clip" style="left:1011px;top:153px;width:492px;height:16px"><div class="t" style="left:3px;top:0px;font-size:12px;line-height:16px;color:#000;transform:scaleX(1.000);transform-origin:0 0"></div></div>
<div class="b" style="left:15px;top:170px;width:1089px;height:16px;background:#fff"></div>
<div class="b" style="left:0px;top:170px;width:14px;height:16px;background:#f0f0f0;border-left:1px solid #fff"></div>
<div class="b" style="left:0px;top:186px;width:1103px;height:1px;background:#b9b9b9"></div>
<div class="clip" style="left:15px;top:170px;width:75px;height:16px"><div class="t" style="left:3px;top:0px;font-size:12px;line-height:16px;color:#000;transform:scaleX(0.880);transform-origin:0 0">APPS</div></div>
<div class="clip" style="left:91px;top:170px;width:38px;height:16px"><div class="t" style="left:3px;top:0px;font-size:12px;line-height:16px;color:#000;transform:scaleX(0.880);transform-origin:0 0">228</div></div>
<div class="clip" style="left:130px;top:170px;width:57px;height:16px"><div class="t" style="left:3px;top:0px;font-size:12px;line-height:16px;color:#000;transform:scaleX(0.880);transform-origin:0 0">21</div></div>
<div class="clip" style="left:188px;top:170px;width:58px;height:16px"><div class="t" style="left:3px;top:0px;font-size:12px;line-height:16px;color:#000;transform:scaleX(0.880);transform-origin:0 0">INACTIVE</div></div>
<div class="clip" style="left:247px;top:170px;width:58px;height:16px"><div class="t" style="left:3px;top:0px;font-size:12px;line-height:16px;color:#000;transform:scaleX(1.010);transform-origin:0 0">devmgr</div></div>
<div class="clip" style="left:306px;top:170px;width:123px;height:16px"><div class="t" style="left:3px;top:0px;font-size:12px;line-height:16px;color:#000;transform:scaleX(1.017);transform-origin:0 0">erpdev.sercomm.com</div></div>
<div class="clip" style="left:430px;top:170px;width:278px;height:16px"><div class="t" style="left:3px;top:0px;font-size:12px;line-height:16px;color:#000;transform:scaleX(0.939);transform-origin:0 0">JDBC Thin Client</div></div>
<div class="clip" style="left:709px;top:170px;width:301px;height:16px"><div class="t" style="left:3px;top:0px;font-size:12px;line-height:16px;color:#000;transform:scaleX(0.994);transform-origin:0 0">e::fwk:fnd.framework.server.OAApplicationModule</div></div>
<div class="clip" style="left:1011px;top:170px;width:492px;height:16px"><div class="t" style="left:3px;top:0px;font-size:12px;line-height:16px;color:#000;transform:scaleX(1.000);transform-origin:0 0">/</div></div>
<div class="b" style="left:15px;top:187px;width:1089px;height:16px;background:#e6ffe6"></div>
<div class="b" style="left:0px;top:187px;width:14px;height:16px;background:#f0f0f0;border-left:1px solid #fff"></div>
<div class="b" style="left:0px;top:203px;width:1103px;height:1px;background:#b9b9b9"></div>
<div class="clip" style="left:15px;top:187px;width:75px;height:16px"><div class="t" style="left:3px;top:0px;font-size:12px;line-height:16px;color:#000;transform:scaleX(0.880);transform-origin:0 0">APPS</div></div>
<div class="clip" style="left:91px;top:187px;width:38px;height:16px"><div class="t" style="left:3px;top:0px;font-size:12px;line-height:16px;color:#000;transform:scaleX(0.880);transform-origin:0 0">378</div></div>
<div class="clip" style="left:130px;top:187px;width:57px;height:16px"><div class="t" style="left:3px;top:0px;font-size:12px;line-height:16px;color:#000;transform:scaleX(0.880);transform-origin:0 0">21</div></div>
<div class="clip" style="left:188px;top:187px;width:58px;height:16px"><div class="t" style="left:3px;top:0px;font-size:12px;line-height:16px;color:#000;transform:scaleX(0.880);transform-origin:0 0">INACTIVE</div></div>
<div class="clip" style="left:247px;top:187px;width:58px;height:16px"><div class="t" style="left:3px;top:0px;font-size:12px;line-height:16px;color:#000;transform:scaleX(1.010);transform-origin:0 0">devmgr</div></div>
<div class="clip" style="left:306px;top:187px;width:123px;height:16px"><div class="t" style="left:3px;top:0px;font-size:12px;line-height:16px;color:#000;transform:scaleX(1.017);transform-origin:0 0">erpdev.sercomm.com</div></div>
<div class="clip" style="left:430px;top:187px;width:278px;height:16px"><div class="t" style="left:3px;top:0px;font-size:12px;line-height:16px;color:#000;transform:scaleX(0.939);transform-origin:0 0">JDBC Thin Client</div></div>
<div class="clip" style="left:709px;top:187px;width:301px;height:16px"><div class="t" style="left:3px;top:0px;font-size:12px;line-height:16px;color:#000;transform:scaleX(0.939);transform-origin:0 0">JDBC Thin Client</div></div>
<div class="clip" style="left:1011px;top:187px;width:492px;height:16px"><div class="t" style="left:3px;top:0px;font-size:12px;line-height:16px;color:#000;transform:scaleX(1.000);transform-origin:0 0"></div></div>
<div class="b" style="left:15px;top:204px;width:1089px;height:16px;background:#fff"></div>
<div class="b" style="left:0px;top:204px;width:14px;height:16px;background:#f0f0f0;border-left:1px solid #fff"></div>
<div class="b" style="left:0px;top:220px;width:1103px;height:1px;background:#b9b9b9"></div>
<div class="clip" style="left:15px;top:204px;width:75px;height:16px"><div class="t" style="left:3px;top:0px;font-size:12px;line-height:16px;color:#000;transform:scaleX(0.880);transform-origin:0 0">APPS</div></div>
<div class="clip" style="left:91px;top:204px;width:38px;height:16px"><div class="t" style="left:3px;top:0px;font-size:12px;line-height:16px;color:#000;transform:scaleX(0.880);transform-origin:0 0">453</div></div>
<div class="clip" style="left:130px;top:204px;width:57px;height:16px"><div class="t" style="left:3px;top:0px;font-size:12px;line-height:16px;color:#000;transform:scaleX(0.880);transform-origin:0 0">13</div></div>
<div class="clip" style="left:188px;top:204px;width:58px;height:16px"><div class="t" style="left:3px;top:0px;font-size:12px;line-height:16px;color:#000;transform:scaleX(0.880);transform-origin:0 0">INACTIVE</div></div>
<div class="clip" style="left:247px;top:204px;width:58px;height:16px"><div class="t" style="left:3px;top:0px;font-size:12px;line-height:16px;color:#000;transform:scaleX(1.010);transform-origin:0 0">devmgr</div></div>
<div class="clip" style="left:306px;top:204px;width:123px;height:16px"><div class="t" style="left:3px;top:0px;font-size:12px;line-height:16px;color:#000;transform:scaleX(1.017);transform-origin:0 0">erpdev.sercomm.com</div></div>
<div class="clip" style="left:430px;top:204px;width:278px;height:16px"><div class="t" style="left:3px;top:0px;font-size:12px;line-height:16px;color:#000;transform:scaleX(0.939);transform-origin:0 0">JDBC Thin Client</div></div>
<div class="clip" style="left:709px;top:204px;width:301px;height:16px"><div class="t" style="left:3px;top:0px;font-size:12px;line-height:16px;color:#000;transform:scaleX(0.939);transform-origin:0 0">JDBC Thin Client</div></div>
<div class="clip" style="left:1011px;top:204px;width:492px;height:16px"><div class="t" style="left:3px;top:0px;font-size:12px;line-height:16px;color:#000;transform:scaleX(1.000);transform-origin:0 0"></div></div>
<div class="b" style="left:15px;top:221px;width:1089px;height:16px;background:#e6ffe6"></div>
<div class="b" style="left:0px;top:221px;width:14px;height:16px;background:#f0f0f0;border-left:1px solid #fff"></div>
<div class="b" style="left:0px;top:237px;width:1103px;height:1px;background:#b9b9b9"></div>
<div class="clip" style="left:15px;top:221px;width:75px;height:16px"><div class="t" style="left:3px;top:0px;font-size:12px;line-height:16px;color:#000;transform:scaleX(0.880);transform-origin:0 0">APPS</div></div>
<div class="clip" style="left:91px;top:221px;width:38px;height:16px"><div class="t" style="left:3px;top:0px;font-size:12px;line-height:16px;color:#000;transform:scaleX(0.880);transform-origin:0 0">603</div></div>
<div class="clip" style="left:130px;top:221px;width:57px;height:16px"><div class="t" style="left:3px;top:0px;font-size:12px;line-height:16px;color:#000;transform:scaleX(0.880);transform-origin:0 0">129</div></div>
<div class="clip" style="left:188px;top:221px;width:58px;height:16px"><div class="t" style="left:3px;top:0px;font-size:12px;line-height:16px;color:#000;transform:scaleX(0.880);transform-origin:0 0">INACTIVE</div></div>
<div class="clip" style="left:247px;top:221px;width:58px;height:16px"><div class="t" style="left:3px;top:0px;font-size:12px;line-height:16px;color:#000;transform:scaleX(1.010);transform-origin:0 0">devmgr</div></div>
<div class="clip" style="left:306px;top:221px;width:123px;height:16px"><div class="t" style="left:3px;top:0px;font-size:12px;line-height:16px;color:#000;transform:scaleX(1.017);transform-origin:0 0">erpdev.sercomm.com</div></div>
<div class="clip" style="left:430px;top:221px;width:278px;height:16px"><div class="t" style="left:3px;top:0px;font-size:12px;line-height:16px;color:#000;transform:scaleX(0.939);transform-origin:0 0">JDBC Thin Client</div></div>
<div class="clip" style="left:709px;top:221px;width:301px;height:16px"><div class="t" style="left:3px;top:0px;font-size:12px;line-height:16px;color:#000;transform:scaleX(0.992);transform-origin:0 0">fnd.framework.service.lookups.server.LookUpAM:R</div></div>
<div class="clip" style="left:1011px;top:221px;width:492px;height:16px"><div class="t" style="left:3px;top:0px;font-size:12px;line-height:16px;color:#000;transform:scaleX(0.880);transform-origin:0 0">26043</div></div>
<div class="b" style="left:15px;top:238px;width:1089px;height:16px;background:#fff"></div>
<div class="b" style="left:0px;top:238px;width:14px;height:16px;background:#f0f0f0;border-left:1px solid #fff"></div>
<div class="b" style="left:0px;top:254px;width:1103px;height:1px;background:#b9b9b9"></div>
<div class="clip" style="left:15px;top:238px;width:75px;height:16px"><div class="t" style="left:3px;top:0px;font-size:12px;line-height:16px;color:#000;transform:scaleX(0.880);transform-origin:0 0">APPS</div></div>
<div class="clip" style="left:91px;top:238px;width:38px;height:16px"><div class="t" style="left:3px;top:0px;font-size:12px;line-height:16px;color:#000;transform:scaleX(0.880);transform-origin:0 0">678</div></div>
<div class="clip" style="left:130px;top:238px;width:57px;height:16px"><div class="t" style="left:3px;top:0px;font-size:12px;line-height:16px;color:#000;transform:scaleX(0.880);transform-origin:0 0">47</div></div>
<div class="clip" style="left:188px;top:238px;width:58px;height:16px"><div class="t" style="left:3px;top:0px;font-size:12px;line-height:16px;color:#000;transform:scaleX(0.880);transform-origin:0 0">INACTIVE</div></div>
<div class="clip" style="left:247px;top:238px;width:58px;height:16px"><div class="t" style="left:3px;top:0px;font-size:12px;line-height:16px;color:#000;transform:scaleX(1.010);transform-origin:0 0">devmgr</div></div>
<div class="clip" style="left:306px;top:238px;width:123px;height:16px"><div class="t" style="left:3px;top:0px;font-size:12px;line-height:16px;color:#000;transform:scaleX(1.017);transform-origin:0 0">erpdev.sercomm.com</div></div>
<div class="clip" style="left:430px;top:238px;width:278px;height:16px"><div class="t" style="left:3px;top:0px;font-size:12px;line-height:16px;color:#000;transform:scaleX(0.939);transform-origin:0 0">JDBC Thin Client</div></div>
<div class="clip" style="left:709px;top:238px;width:301px;height:16px"><div class="t" style="left:3px;top:0px;font-size:12px;line-height:16px;color:#000;transform:scaleX(0.939);transform-origin:0 0">JDBC Thin Client</div></div>
<div class="clip" style="left:1011px;top:238px;width:492px;height:16px"><div class="t" style="left:3px;top:0px;font-size:12px;line-height:16px;color:#000;transform:scaleX(1.000);transform-origin:0 0"></div></div>
<div class="b" style="left:15px;top:255px;width:1089px;height:16px;background:#e6ffe6"></div>
<div class="b" style="left:0px;top:255px;width:14px;height:16px;background:#f0f0f0;border-left:1px solid #fff"></div>
<div class="b" style="left:0px;top:271px;width:1103px;height:1px;background:#b9b9b9"></div>
<div class="clip" style="left:15px;top:255px;width:75px;height:16px"><div class="t" style="left:3px;top:0px;font-size:12px;line-height:16px;color:#000;transform:scaleX(0.880);transform-origin:0 0">APPS</div></div>
<div class="clip" style="left:91px;top:255px;width:38px;height:16px"><div class="t" style="left:3px;top:0px;font-size:12px;line-height:16px;color:#000;transform:scaleX(0.880);transform-origin:0 0">752</div></div>
<div class="clip" style="left:130px;top:255px;width:57px;height:16px"><div class="t" style="left:3px;top:0px;font-size:12px;line-height:16px;color:#000;transform:scaleX(0.880);transform-origin:0 0">97</div></div>
<div class="clip" style="left:188px;top:255px;width:58px;height:16px"><div class="t" style="left:3px;top:0px;font-size:12px;line-height:16px;color:#000;transform:scaleX(0.880);transform-origin:0 0">INACTIVE</div></div>
<div class="clip" style="left:247px;top:255px;width:58px;height:16px"><div class="t" style="left:3px;top:0px;font-size:12px;line-height:16px;color:#000;transform:scaleX(1.010);transform-origin:0 0">devmgr</div></div>
<div class="clip" style="left:306px;top:255px;width:123px;height:16px"><div class="t" style="left:3px;top:0px;font-size:12px;line-height:16px;color:#000;transform:scaleX(1.017);transform-origin:0 0">erpdev.sercomm.com</div></div>
<div class="clip" style="left:430px;top:255px;width:278px;height:16px"><div class="t" style="left:3px;top:0px;font-size:12px;line-height:16px;color:#000;transform:scaleX(0.939);transform-origin:0 0">JDBC Thin Client</div></div>
<div class="clip" style="left:709px;top:255px;width:301px;height:16px"><div class="t" style="left:3px;top:0px;font-size:12px;line-height:16px;color:#000;transform:scaleX(0.994);transform-origin:0 0">e::fwk:fnd.framework.server.OAApplicationModule</div></div>
<div class="clip" style="left:1011px;top:255px;width:492px;height:16px"><div class="t" style="left:3px;top:0px;font-size:12px;line-height:16px;color:#000;transform:scaleX(1.000);transform-origin:0 0">/</div></div>
<div class="b" style="left:15px;top:272px;width:1089px;height:16px;background:#fff"></div>
<div class="b" style="left:0px;top:272px;width:14px;height:16px;background:#f0f0f0;border-left:1px solid #fff"></div>
<div class="b" style="left:0px;top:288px;width:1103px;height:1px;background:#b9b9b9"></div>
<div class="clip" style="left:15px;top:272px;width:75px;height:16px"><div class="t" style="left:3px;top:0px;font-size:12px;line-height:16px;color:#000;transform:scaleX(0.880);transform-origin:0 0">APPS</div></div>
<div class="clip" style="left:91px;top:272px;width:38px;height:16px"><div class="t" style="left:3px;top:0px;font-size:12px;line-height:16px;color:#000;transform:scaleX(0.880);transform-origin:0 0">904</div></div>
<div class="clip" style="left:130px;top:272px;width:57px;height:16px"><div class="t" style="left:3px;top:0px;font-size:12px;line-height:16px;color:#000;transform:scaleX(0.880);transform-origin:0 0">1</div></div>
<div class="clip" style="left:188px;top:272px;width:58px;height:16px"><div class="t" style="left:3px;top:0px;font-size:12px;line-height:16px;color:#000;transform:scaleX(0.880);transform-origin:0 0">INACTIVE</div></div>
<div class="clip" style="left:247px;top:272px;width:58px;height:16px"><div class="t" style="left:3px;top:0px;font-size:12px;line-height:16px;color:#000;transform:scaleX(1.010);transform-origin:0 0">devmgr</div></div>
<div class="clip" style="left:306px;top:272px;width:123px;height:16px"><div class="t" style="left:3px;top:0px;font-size:12px;line-height:16px;color:#000;transform:scaleX(1.017);transform-origin:0 0">erpdev.sercomm.com</div></div>
<div class="clip" style="left:430px;top:272px;width:278px;height:16px"><div class="t" style="left:3px;top:0px;font-size:12px;line-height:16px;color:#000;transform:scaleX(0.939);transform-origin:0 0">JDBC Thin Client</div></div>
<div class="clip" style="left:709px;top:272px;width:301px;height:16px"><div class="t" style="left:3px;top:0px;font-size:12px;line-height:16px;color:#000;transform:scaleX(0.982);transform-origin:0 0">fnd.sso.login.server.MainLoginPageAM:R</div></div>
<div class="clip" style="left:1011px;top:272px;width:492px;height:16px"><div class="t" style="left:3px;top:0px;font-size:12px;line-height:16px;color:#000;transform:scaleX(0.880);transform-origin:0 0">26043</div></div>
<div class="b" style="left:15px;top:289px;width:1089px;height:16px;background:#e6ffe6"></div>
<div class="b" style="left:0px;top:289px;width:14px;height:16px;background:#f0f0f0;border-left:1px solid #fff"></div>
<div class="b" style="left:0px;top:305px;width:1103px;height:1px;background:#b9b9b9"></div>
<div class="clip" style="left:15px;top:289px;width:75px;height:16px"><div class="t" style="left:3px;top:0px;font-size:12px;line-height:16px;color:#000;transform:scaleX(0.880);transform-origin:0 0">APPS</div></div>
<div class="clip" style="left:91px;top:289px;width:38px;height:16px"><div class="t" style="left:3px;top:0px;font-size:12px;line-height:16px;color:#000;transform:scaleX(0.880);transform-origin:0 0">978</div></div>
<div class="clip" style="left:130px;top:289px;width:57px;height:16px"><div class="t" style="left:3px;top:0px;font-size:12px;line-height:16px;color:#000;transform:scaleX(0.880);transform-origin:0 0">87</div></div>
<div class="clip" style="left:188px;top:289px;width:58px;height:16px"><div class="t" style="left:3px;top:0px;font-size:12px;line-height:16px;color:#000;transform:scaleX(0.880);transform-origin:0 0">INACTIVE</div></div>
<div class="clip" style="left:247px;top:289px;width:58px;height:16px"><div class="t" style="left:3px;top:0px;font-size:12px;line-height:16px;color:#000;transform:scaleX(1.010);transform-origin:0 0">devmgr</div></div>
<div class="clip" style="left:306px;top:289px;width:123px;height:16px"><div class="t" style="left:3px;top:0px;font-size:12px;line-height:16px;color:#000;transform:scaleX(1.017);transform-origin:0 0">erpdev.sercomm.com</div></div>
<div class="clip" style="left:430px;top:289px;width:278px;height:16px"><div class="t" style="left:3px;top:0px;font-size:12px;line-height:16px;color:#000;transform:scaleX(0.939);transform-origin:0 0">JDBC Thin Client</div></div>
<div class="clip" style="left:709px;top:289px;width:301px;height:16px"><div class="t" style="left:3px;top:0px;font-size:12px;line-height:16px;color:#000;transform:scaleX(0.992);transform-origin:0 0">fnd.framework.service.lookups.server.LookUpAM:R</div></div>
<div class="clip" style="left:1011px;top:289px;width:492px;height:16px"><div class="t" style="left:3px;top:0px;font-size:12px;line-height:16px;color:#000;transform:scaleX(0.880);transform-origin:0 0">26045</div></div>
<div class="b" style="left:15px;top:306px;width:1089px;height:16px;background:#fff"></div>
<div class="b" style="left:0px;top:306px;width:14px;height:16px;background:#f0f0f0;border-left:1px solid #fff"></div>
<div class="b" style="left:0px;top:322px;width:1103px;height:1px;background:#b9b9b9"></div>
<div class="clip" style="left:15px;top:306px;width:75px;height:16px"><div class="t" style="left:3px;top:0px;font-size:12px;line-height:16px;color:#000;transform:scaleX(0.880);transform-origin:0 0">APPS</div></div>
<div class="clip" style="left:91px;top:306px;width:38px;height:16px"><div class="t" style="left:3px;top:0px;font-size:12px;line-height:16px;color:#000;transform:scaleX(0.910);transform-origin:0 0">1128</div></div>
<div class="clip" style="left:130px;top:306px;width:57px;height:16px"><div class="t" style="left:3px;top:0px;font-size:12px;line-height:16px;color:#000;transform:scaleX(0.880);transform-origin:0 0">45</div></div>
<div class="clip" style="left:188px;top:306px;width:58px;height:16px"><div class="t" style="left:3px;top:0px;font-size:12px;line-height:16px;color:#000;transform:scaleX(0.880);transform-origin:0 0">INACTIVE</div></div>
<div class="clip" style="left:247px;top:306px;width:58px;height:16px"><div class="t" style="left:3px;top:0px;font-size:12px;line-height:16px;color:#000;transform:scaleX(1.010);transform-origin:0 0">devmgr</div></div>
<div class="clip" style="left:306px;top:306px;width:123px;height:16px"><div class="t" style="left:3px;top:0px;font-size:12px;line-height:16px;color:#000;transform:scaleX(1.017);transform-origin:0 0">erpdev.sercomm.com</div></div>
<div class="clip" style="left:430px;top:306px;width:278px;height:16px"><div class="t" style="left:3px;top:0px;font-size:12px;line-height:16px;color:#000;transform:scaleX(0.939);transform-origin:0 0">JDBC Thin Client</div></div>
<div class="clip" style="left:709px;top:306px;width:301px;height:16px"><div class="t" style="left:3px;top:0px;font-size:12px;line-height:16px;color:#000;transform:scaleX(0.982);transform-origin:0 0">fnd.sso.login.server.MainLoginPageAM:R</div></div>
<div class="clip" style="left:1011px;top:306px;width:492px;height:16px"><div class="t" style="left:3px;top:0px;font-size:12px;line-height:16px;color:#000;transform:scaleX(0.880);transform-origin:0 0">26043</div></div>
<div class="b" style="left:90px;top:0px;width:1px;height:319px;background:#b9b9b9"></div>
<div class="b" style="left:129px;top:0px;width:1px;height:319px;background:#b9b9b9"></div>
<div class="b" style="left:187px;top:0px;width:1px;height:319px;background:#b9b9b9"></div>
<div class="b" style="left:246px;top:0px;width:1px;height:319px;background:#b9b9b9"></div>
<div class="b" style="left:305px;top:0px;width:1px;height:319px;background:#b9b9b9"></div>
<div class="b" style="left:429px;top:0px;width:1px;height:319px;background:#b9b9b9"></div>
<div class="b" style="left:708px;top:0px;width:1px;height:319px;background:#b9b9b9"></div>
<div class="b" style="left:1010px;top:0px;width:1px;height:319px;background:#b9b9b9"></div>
</div>
<div class="b" style="left:300px;top:109px;width:1px;height:16px;background:#a0a0a0"></div>
<div class="b" style="left:339px;top:109px;width:1px;height:16px;background:#a0a0a0"></div>
<div class="b" style="left:397px;top:109px;width:1px;height:16px;background:#a0a0a0"></div>
<div class="b" style="left:456px;top:109px;width:1px;height:16px;background:#a0a0a0"></div>
<div class="b" style="left:515px;top:109px;width:1px;height:16px;background:#a0a0a0"></div>
<div class="b" style="left:639px;top:109px;width:1px;height:16px;background:#a0a0a0"></div>
<div class="b" style="left:918px;top:109px;width:1px;height:16px;background:#a0a0a0"></div>
<div class="b" style="left:1220px;top:109px;width:1px;height:16px;background:#a0a0a0"></div>
<div class="t" style="left:228px;top:109px;font-size:12px;line-height:16px;color:#000;transform:scaleX(0.990);transform-origin:0 0;">Username</div>
<div class="b" style="left:286px;top:109px;width:13px;height:1px;background:#fff"></div>
<div class="b" style="left:286px;top:109px;width:1px;height:13px;background:#fff"></div>
<div class="b" style="left:286px;top:122px;width:14px;height:1px;background:#a0a0a0"></div>
<div class="b" style="left:299px;top:109px;width:1px;height:14px;background:#a0a0a0"></div>
<div class="b" style="left:225px;top:109px;width:1px;height:15px;background:#fff"></div>
<div class="t" style="left:304px;top:109px;font-size:12px;line-height:16px;color:#000;transform:scaleX(0.950);transform-origin:0 0;">Sid</div>
<div class="b" style="left:325px;top:109px;width:13px;height:1px;background:#fff"></div>
<div class="b" style="left:325px;top:109px;width:1px;height:13px;background:#fff"></div>
<div class="b" style="left:325px;top:122px;width:14px;height:1px;background:#a0a0a0"></div>
<div class="b" style="left:338px;top:109px;width:1px;height:14px;background:#a0a0a0"></div>
<div class="b" style="left:301px;top:109px;width:1px;height:15px;background:#fff"></div>
<div class="t" style="left:343px;top:109px;font-size:12px;line-height:16px;color:#000;transform:scaleX(0.980);transform-origin:0 0;">Serial#</div>
<div class="b" style="left:383px;top:109px;width:13px;height:1px;background:#fff"></div>
<div class="b" style="left:383px;top:109px;width:1px;height:13px;background:#fff"></div>
<div class="b" style="left:383px;top:122px;width:14px;height:1px;background:#a0a0a0"></div>
<div class="b" style="left:396px;top:109px;width:1px;height:14px;background:#a0a0a0"></div>
<div class="b" style="left:340px;top:109px;width:1px;height:15px;background:#fff"></div>
<div class="t" style="left:401px;top:109px;font-size:12px;line-height:16px;color:#000;transform:scaleX(0.979);transform-origin:0 0;">Status</div>
<div class="b" style="left:442px;top:109px;width:13px;height:1px;background:#fff"></div>
<div class="b" style="left:442px;top:109px;width:1px;height:13px;background:#fff"></div>
<div class="b" style="left:442px;top:122px;width:14px;height:1px;background:#a0a0a0"></div>
<div class="b" style="left:455px;top:109px;width:1px;height:14px;background:#a0a0a0"></div>
<div class="b" style="left:398px;top:109px;width:1px;height:15px;background:#fff"></div>
<div class="t" style="left:460px;top:109px;font-size:12px;line-height:16px;color:#000;transform:scaleX(0.979);transform-origin:0 0;">Osuser</div>
<div class="b" style="left:501px;top:109px;width:13px;height:1px;background:#fff"></div>
<div class="b" style="left:501px;top:109px;width:1px;height:13px;background:#fff"></div>
<div class="b" style="left:501px;top:122px;width:14px;height:1px;background:#a0a0a0"></div>
<div class="b" style="left:514px;top:109px;width:1px;height:14px;background:#a0a0a0"></div>
<div class="b" style="left:457px;top:109px;width:1px;height:15px;background:#fff"></div>
<div class="t" style="left:519px;top:109px;font-size:12px;line-height:16px;color:#000;transform:scaleX(0.981);transform-origin:0 0;">Machine</div>
<div class="b" style="left:625px;top:109px;width:13px;height:1px;background:#fff"></div>
<div class="b" style="left:625px;top:109px;width:1px;height:13px;background:#fff"></div>
<div class="b" style="left:625px;top:122px;width:14px;height:1px;background:#a0a0a0"></div>
<div class="b" style="left:638px;top:109px;width:1px;height:14px;background:#a0a0a0"></div>
<div class="b" style="left:516px;top:109px;width:1px;height:15px;background:#fff"></div>
<div class="t" style="left:643px;top:109px;font-size:12px;line-height:16px;color:#000;transform:scaleX(0.987);transform-origin:0 0;">Program</div>
<div class="b" style="left:904px;top:109px;width:13px;height:1px;background:#fff"></div>
<div class="b" style="left:904px;top:109px;width:1px;height:13px;background:#fff"></div>
<div class="b" style="left:904px;top:122px;width:14px;height:1px;background:#a0a0a0"></div>
<div class="b" style="left:917px;top:109px;width:1px;height:14px;background:#a0a0a0"></div>
<div class="b" style="left:640px;top:109px;width:1px;height:15px;background:#fff"></div>
<div class="t" style="left:922px;top:109px;font-size:12px;line-height:16px;color:#000;transform:scaleX(0.977);transform-origin:0 0;">Module</div>
<div class="b" style="left:1206px;top:109px;width:13px;height:1px;background:#fff"></div>
<div class="b" style="left:1206px;top:109px;width:1px;height:13px;background:#fff"></div>
<div class="b" style="left:1206px;top:122px;width:14px;height:1px;background:#a0a0a0"></div>
<div class="b" style="left:1219px;top:109px;width:1px;height:14px;background:#a0a0a0"></div>
<div class="b" style="left:919px;top:109px;width:1px;height:15px;background:#fff"></div>
<div class="t" style="left:1224px;top:109px;font-size:12px;line-height:16px;color:#000;transform:scaleX(0.979);transform-origin:0 0;">Action</div>
<div class="b" style="left:1221px;top:109px;width:1px;height:15px;background:#fff"></div>
<div class="b" style="left:211px;top:445px;width:1102px;height:17px;background:#f0f0f0"></div>
<svg class="ic" style="left:217px;top:450px;width:4px;height:7px" viewBox="0 0 4 7"><path d="M0 3.5L4 0v7z" fill="#404040"/></svg>
<div class="b" style="left:229px;top:446px;width:112px;height:15px;border:1px solid #a0a0a0;border-radius:2px;background:linear-gradient(180deg,#f4f4f4,#e0e0e0 60%,#d0d0d0)"></div>
<div class="b" style="left:282px;top:450px;width:1px;height:7px;background:#606060"></div>
<div class="b" style="left:285px;top:450px;width:1px;height:7px;background:#606060"></div>
<div class="b" style="left:288px;top:450px;width:1px;height:7px;background:#606060"></div>
<div class="b" style="left:210px;top:462px;width:1103px;height:1px;background:#f0f0f0"></div>
<div class="b" style="left:209px;top:463px;width:1104px;height:1px;background:#a0a0a0"></div>
<div class="b" style="left:209px;top:491px;width:1104px;height:136px;border-left:1px solid #a0a0a0;border-top:1px solid #a0a0a0;background:#fff"></div>
<div class="b" style="left:265px;top:472px;width:56px;height:19px;border:1px solid #a0a0a0;border-bottom:none;background:linear-gradient(180deg,#f4f4f4,#e8e8e8 50%,#d8d8d8)"></div>
<div class="t" style="left:269px;top:474px;font-size:12px;line-height:16px;color:#000;transform:scaleX(0.961);transform-origin:0 0;">SQL Text</div>
<div class="b" style="left:321px;top:472px;width:58px;height:19px;border:1px solid #a0a0a0;border-bottom:none;background:linear-gradient(180deg,#f4f4f4,#e8e8e8 50%,#d8d8d8)"></div>
<div class="t" style="left:327px;top:474px;font-size:12px;line-height:16px;color:#000;transform:scaleX(0.988);transform-origin:0 0;">Statistics</div>
<div class="b" style="left:379px;top:472px;width:46px;height:19px;border:1px solid #a0a0a0;border-bottom:none;background:linear-gradient(180deg,#f4f4f4,#e8e8e8 50%,#d8d8d8)"></div>
<div class="t" style="left:385px;top:474px;font-size:12px;line-height:16px;color:#000;transform:scaleX(0.982);transform-origin:0 0;">Locks</div>
<div class="b" style="left:209px;top:469px;width:56px;height:23px;border:1px solid #a0a0a0;border-bottom:none;background:#fff"></div>
<div class="t" style="left:217px;top:472px;font-size:12px;line-height:16px;color:#000;transform:scaleX(0.983);transform-origin:0 0;">Cursors</div>
<div class="b" style="left:213px;top:495px;width:1100px;height:132px;border-left:1px solid #a0a0a0;border-top:1px solid #a0a0a0;background:#fff"></div>
<div class="b" style="left:214px;top:496px;width:1099px;height:17px;background:#f0f0f0"></div>
<div class="b" style="left:214px;top:496px;width:1099px;height:1px;background:#fff"></div>
<div class="b" style="left:214px;top:512px;width:1099px;height:1px;background:#fff"></div>
<div class="b" style="left:214px;top:513px;width:1099px;height:1px;background:#a0a0a0"></div>
<div class="b" style="left:228px;top:496px;width:1px;height:128px;background:#a0a0a0"></div>
<div class="clip" style="left:214px;top:514px;width:1099px;height:110px">
<div class="b" style="left:15px;top:0px;width:1085px;height:16px;background:#fff"></div>
<div class="b" style="left:0px;top:0px;width:14px;height:16px;background:#f0f0f0;border-left:1px solid #fff"></div>
<div class="b" style="left:0px;top:16px;width:1099px;height:1px;background:#b9b9b9"></div>
<svg class="ic" style="left:5px;top:3px;width:6px;height:10px" viewBox="0 0 6 10"><path d="M0 0l6 5-6 5z" fill="#000"/></svg>
<div class="clip" style="left:15px;top:0px;width:103px;height:16px"><div class="t" style="left:3px;top:0px;font-size:12px;line-height:16px;color:#000;transform:scaleX(0.880);transform-origin:0 0">000000045272F418</div></div>
<div class="clip" style="left:119px;top:0px;width:78px;height:16px"><div class="t" style="left:3px;top:0px;font-size:12px;line-height:16px;color:#000;transform:scaleX(0.880);transform-origin:0 0">APPS</div></div>
<div class="clip" style="left:198px;top:0px;width:110px;height:16px"><div class="t" style="left:3px;top:0px;font-size:12px;line-height:16px;color:#000;transform:scaleX(0.880);transform-origin:0 0">0000000459EC3088</div></div>
<div class="clip" style="left:309px;top:0px;width:80px;height:16px"><div class="t" style="left:3px;top:0px;font-size:12px;line-height:16px;color:#000;transform:scaleX(0.880);transform-origin:0 0">673844243</div></div>
<div class="clip" style="left:390px;top:0px;width:96px;height:16px"><div class="t" style="left:3px;top:0px;font-size:12px;line-height:16px;color:#000;transform:scaleX(0.942);transform-origin:0 0">9g485acn2n30m</div></div>
<div class="clip" style="left:487px;top:0px;width:399px;height:16px"><div class="t" style="left:3px;top:0px;font-size:12px;line-height:16px;color:#000;transform:scaleX(1.005);transform-origin:0 0">select col#,intcol#,reftyp,stabid,expctoid from refcon$ wher</div></div>
<div class="clip" style="left:887px;top:0px;width:122px;height:16px"><div class="t" style="left:3px;top:0px;font-size:12px;line-height:16px;color:#000;transform:scaleX(1.000);transform-origin:0 0"></div></div>
<div class="clip" style="left:1010px;top:0px;width:77px;height:16px"><div class="t" style="left:3px;top:0px;font-size:12px;line-height:16px;color:#000;transform:scaleX(1.000);transform-origin:0 0"></div></div>
<div class="clip" style="left:1088px;top:0px;width:411px;height:16px"><div class="t" style="left:3px;top:0px;font-size:12px;line-height:16px;color:#000;transform:scaleX(0.880);transform-origin:0 0">D</div></div>
<div class="b" style="left:15px;top:17px;width:1085px;height:16px;background:#e6ffe6"></div>
<div class="b" style="left:0px;top:17px;width:14px;height:16px;background:#f0f0f0;border-left:1px solid #fff"></div>
<div class="b" style="left:0px;top:33px;width:1099px;height:1px;background:#b9b9b9"></div>
<div class="clip" style="left:15px;top:17px;width:103px;height:16px"><div class="t" style="left:3px;top:0px;font-size:12px;line-height:16px;color:#000;transform:scaleX(0.880);transform-origin:0 0">000000045272F418</div></div>
<div class="clip" style="left:119px;top:17px;width:78px;height:16px"><div class="t" style="left:3px;top:0px;font-size:12px;line-height:16px;color:#000;transform:scaleX(0.880);transform-origin:0 0">APPS</div></div>
<div class="clip" style="left:198px;top:17px;width:110px;height:16px"><div class="t" style="left:3px;top:0px;font-size:12px;line-height:16px;color:#000;transform:scaleX(0.880);transform-origin:0 0">0000000459DC83D0</div></div>
<div class="clip" style="left:309px;top:17px;width:80px;height:16px"><div class="t" style="left:3px;top:0px;font-size:12px;line-height:16px;color:#000;transform:scaleX(0.880);transform-origin:0 0">3272871235</div></div>
<div class="clip" style="left:390px;top:17px;width:96px;height:16px"><div class="t" style="left:3px;top:0px;font-size:12px;line-height:16px;color:#000;transform:scaleX(0.955);transform-origin:0 0">7ujfmgb1j83a3</div></div>
<div class="clip" style="left:487px;top:17px;width:399px;height:16px"><div class="t" style="left:3px;top:0px;font-size:12px;line-height:16px;color:#000;transform:scaleX(0.892);transform-origin:0 0">BEGIN  FND_AOLJ_UTIL.SET_NLS_CONTEXT(      :1,:2,:3,:4,:5,:</div></div>
<div class="clip" style="left:887px;top:17px;width:122px;height:16px"><div class="t" style="left:3px;top:0px;font-size:12px;line-height:16px;color:#000;transform:scaleX(1.000);transform-origin:0 0"></div></div>
<div class="clip" style="left:1010px;top:17px;width:77px;height:16px"><div class="t" style="left:3px;top:0px;font-size:12px;line-height:16px;color:#000;transform:scaleX(1.000);transform-origin:0 0"></div></div>
<div class="clip" style="left:1088px;top:17px;width:411px;height:16px"><div class="t" style="left:3px;top:0px;font-size:12px;line-height:16px;color:#000;transform:scaleX(0.880);transform-origin:0 0">O</div></div>
<div class="b" style="left:15px;top:34px;width:1085px;height:16px;background:#fff"></div>
<div class="b" style="left:0px;top:34px;width:14px;height:16px;background:#f0f0f0;border-left:1px solid #fff"></div>
<div class="b" style="left:0px;top:50px;width:1099px;height:1px;background:#b9b9b9"></div>
<div class="clip" style="left:15px;top:34px;width:103px;height:16px"><div class="t" style="left:3px;top:0px;font-size:12px;line-height:16px;color:#000;transform:scaleX(0.880);transform-origin:0 0">000000045272F418</div></div>
<div class="clip" style="left:119px;top:34px;width:78px;height:16px"><div class="t" style="left:3px;top:0px;font-size:12px;line-height:16px;color:#000;transform:scaleX(0.880);transform-origin:0 0">APPS</div></div>
<div class="clip" style="left:198px;top:34px;width:110px;height:16px"><div class="t" style="left:3px;top:0px;font-size:12px;line-height:16px;color:#000;transform:scaleX(0.880);transform-origin:0 0">000000045DEB0E70</div></div>
<div class="clip" style="left:309px;top:34px;width:80px;height:16px"><div class="t" style="left:3px;top:0px;font-size:12px;line-height:16px;color:#000;transform:scaleX(0.880);transform-origin:0 0">2062160709</div></div>
<div class="clip" style="left:390px;top:34px;width:96px;height:16px"><div class="t" style="left:3px;top:0px;font-size:12px;line-height:16px;color:#000;transform:scaleX(0.954);transform-origin:0 0">37kp7bjxfn4u5</div></div>
<div class="clip" style="left:487px;top:34px;width:399px;height:16px"><div class="t" style="left:3px;top:0px;font-size:12px;line-height:16px;color:#000;transform:scaleX(0.882);transform-origin:0 0">SELECT NLS_DATE_LANGUAGE FROM (SELECT UTF8_DATE_LANGUAGE NLS</div></div>
<div class="clip" style="left:887px;top:34px;width:122px;height:16px"><div class="t" style="left:3px;top:0px;font-size:12px;line-height:16px;color:#000;transform:scaleX(1.000);transform-origin:0 0"></div></div>
<div class="clip" style="left:1010px;top:34px;width:77px;height:16px"><div class="t" style="left:3px;top:0px;font-size:12px;line-height:16px;color:#000;transform:scaleX(1.000);transform-origin:0 0"></div></div>
<div class="clip" style="left:1088px;top:34px;width:411px;height:16px"><div class="t" style="left:3px;top:0px;font-size:12px;line-height:16px;color:#000;transform:scaleX(0.880);transform-origin:0 0">P</div></div>
<div class="b" style="left:15px;top:51px;width:1085px;height:16px;background:#e6ffe6"></div>
<div class="b" style="left:0px;top:51px;width:14px;height:16px;background:#f0f0f0;border-left:1px solid #fff"></div>
<div class="b" style="left:0px;top:67px;width:1099px;height:1px;background:#b9b9b9"></div>
<div class="clip" style="left:15px;top:51px;width:103px;height:16px"><div class="t" style="left:3px;top:0px;font-size:12px;line-height:16px;color:#000;transform:scaleX(0.880);transform-origin:0 0">000000045272F418</div></div>
<div class="clip" style="left:119px;top:51px;width:78px;height:16px"><div class="t" style="left:3px;top:0px;font-size:12px;line-height:16px;color:#000;transform:scaleX(0.880);transform-origin:0 0">APPS</div></div>
<div class="clip" style="left:198px;top:51px;width:110px;height:16px"><div class="t" style="left:3px;top:0px;font-size:12px;line-height:16px;color:#000;transform:scaleX(0.880);transform-origin:0 0">0000000457D96AE0</div></div>
<div class="clip" style="left:309px;top:51px;width:80px;height:16px"><div class="t" style="left:3px;top:0px;font-size:12px;line-height:16px;color:#000;transform:scaleX(0.880);transform-origin:0 0">2195068792</div></div>
<div class="clip" style="left:390px;top:51px;width:96px;height:16px"><div class="t" style="left:3px;top:0px;font-size:12px;line-height:16px;color:#000;transform:scaleX(0.977);transform-origin:0 0">asvzxj61dc5vs</div></div>
<div class="clip" style="left:487px;top:51px;width:399px;height:16px"><div class="t" style="left:3px;top:0px;font-size:12px;line-height:16px;color:#000;transform:scaleX(0.995);transform-origin:0 0">select timestamp, flags from fixed_obj$ where obj#=:1</div></div>
<div class="clip" style="left:887px;top:51px;width:122px;height:16px"><div class="t" style="left:3px;top:0px;font-size:12px;line-height:16px;color:#000;transform:scaleX(1.000);transform-origin:0 0"></div></div>
<div class="clip" style="left:1010px;top:51px;width:77px;height:16px"><div class="t" style="left:3px;top:0px;font-size:12px;line-height:16px;color:#000;transform:scaleX(1.000);transform-origin:0 0"></div></div>
<div class="clip" style="left:1088px;top:51px;width:411px;height:16px"><div class="t" style="left:3px;top:0px;font-size:12px;line-height:16px;color:#000;transform:scaleX(0.880);transform-origin:0 0">SI</div></div>
<div class="b" style="left:15px;top:68px;width:1085px;height:16px;background:#fff"></div>
<div class="b" style="left:0px;top:68px;width:14px;height:16px;background:#f0f0f0;border-left:1px solid #fff"></div>
<div class="b" style="left:0px;top:84px;width:1099px;height:1px;background:#b9b9b9"></div>
<div class="clip" style="left:15px;top:68px;width:103px;height:16px"><div class="t" style="left:3px;top:0px;font-size:12px;line-height:16px;color:#000;transform:scaleX(0.880);transform-origin:0 0">000000045272F418</div></div>
<div class="clip" style="left:119px;top:68px;width:78px;height:16px"><div class="t" style="left:3px;top:0px;font-size:12px;line-height:16px;color:#000;transform:scaleX(0.880);transform-origin:0 0">APPS</div></div>
<div class="clip" style="left:198px;top:68px;width:110px;height:16px"><div class="t" style="left:3px;top:0px;font-size:12px;line-height:16px;color:#000;transform:scaleX(0.880);transform-origin:0 0">000000045BA89160</div></div>
<div class="clip" style="left:309px;top:68px;width:80px;height:16px"><div class="t" style="left:3px;top:0px;font-size:12px;line-height:16px;color:#000;transform:scaleX(0.880);transform-origin:0 0">1440489778</div></div>
<div class="clip" style="left:390px;top:68px;width:96px;height:16px"><div class="t" style="left:3px;top:0px;font-size:12px;line-height:16px;color:#000;transform:scaleX(0.947);transform-origin:0 0">8w57t3xaxs89k</div></div>
<div class="clip" style="left:487px;top:68px;width:399px;height:16px"><div class="t" style="left:3px;top:0px;font-size:12px;line-height:16px;color:#000;transform:scaleX(0.880);transform-origin:0 0">SELECT NAME, VERSION FROM FND_CACHE_VERSIONS</div></div>
<div class="clip" style="left:887px;top:68px;width:122px;height:16px"><div class="t" style="left:3px;top:0px;font-size:12px;line-height:16px;color:#000;transform:scaleX(1.000);transform-origin:0 0"></div></div>
<div class="clip" style="left:1010px;top:68px;width:77px;height:16px"><div class="t" style="left:3px;top:0px;font-size:12px;line-height:16px;color:#000;transform:scaleX(1.000);transform-origin:0 0"></div></div>
<div class="clip" style="left:1088px;top:68px;width:411px;height:16px"><div class="t" style="left:3px;top:0px;font-size:12px;line-height:16px;color:#000;transform:scaleX(0.880);transform-origin:0 0">P</div></div>
<div class="b" style="left:15px;top:85px;width:1085px;height:16px;background:#e6ffe6"></div>
<div class="b" style="left:0px;top:85px;width:14px;height:16px;background:#f0f0f0;border-left:1px solid #fff"></div>
<div class="b" style="left:0px;top:101px;width:1099px;height:1px;background:#b9b9b9"></div>
<div class="clip" style="left:15px;top:85px;width:103px;height:16px"><div class="t" style="left:3px;top:0px;font-size:12px;line-height:16px;color:#000;transform:scaleX(0.880);transform-origin:0 0">000000045272F418</div></div>
<div class="clip" style="left:119px;top:85px;width:78px;height:16px"><div class="t" style="left:3px;top:0px;font-size:12px;line-height:16px;color:#000;transform:scaleX(0.880);transform-origin:0 0">APPS</div></div>
<div class="clip" style="left:198px;top:85px;width:110px;height:16px"><div class="t" style="left:3px;top:0px;font-size:12px;line-height:16px;color:#000;transform:scaleX(0.880);transform-origin:0 0">000000045DEE3F60</div></div>
<div class="clip" style="left:309px;top:85px;width:80px;height:16px"><div class="t" style="left:3px;top:0px;font-size:12px;line-height:16px;color:#000;transform:scaleX(0.880);transform-origin:0 0">24263493</div></div>
<div class="clip" style="left:390px;top:85px;width:96px;height:16px"><div class="t" style="left:3px;top:0px;font-size:12px;line-height:16px;color:#000;transform:scaleX(0.929);transform-origin:0 0">1rd31t40r4fu5</div></div>
<div class="clip" style="left:487px;top:85px;width:399px;height:16px"><div class="t" style="left:3px;top:0px;font-size:12px;line-height:16px;color:#000;transform:scaleX(0.924);transform-origin:0 0">BEGIN   fnd_global.bless_next_init(&#x27;FND_PERMIT_0006&#x27;);   FND</div></div>
<div class="clip" style="left:887px;top:85px;width:122px;height:16px"><div class="t" style="left:3px;top:0px;font-size:12px;line-height:16px;color:#000;transform:scaleX(1.000);transform-origin:0 0"></div></div>
<div class="clip" style="left:1010px;top:85px;width:77px;height:16px"><div class="t" style="left:3px;top:0px;font-size:12px;line-height:16px;color:#000;transform:scaleX(1.000);transform-origin:0 0"></div></div>
<div class="clip" style="left:1088px;top:85px;width:411px;height:16px"><div class="t" style="left:3px;top:0px;font-size:12px;line-height:16px;color:#000;transform:scaleX(0.880);transform-origin:0 0">O</div></div>
<div class="b" style="left:15px;top:102px;width:1085px;height:16px;background:#fff"></div>
<div class="b" style="left:0px;top:102px;width:14px;height:16px;background:#f0f0f0;border-left:1px solid #fff"></div>
<div class="b" style="left:0px;top:118px;width:1099px;height:1px;background:#b9b9b9"></div>
<div class="clip" style="left:15px;top:102px;width:103px;height:16px"><div class="t" style="left:3px;top:0px;font-size:12px;line-height:16px;color:#000;transform:scaleX(0.880);transform-origin:0 0">000000045272F418</div></div>
<div class="clip" style="left:119px;top:102px;width:78px;height:16px"><div class="t" style="left:3px;top:0px;font-size:12px;line-height:16px;color:#000;transform:scaleX(0.880);transform-origin:0 0">APPS</div></div>
<div class="clip" style="left:198px;top:102px;width:110px;height:16px"><div class="t" style="left:3px;top:0px;font-size:12px;line-height:16px;color:#000;transform:scaleX(0.880);transform-origin:0 0">0000000459EC3908</div></div>
<div class="clip" style="left:309px;top:102px;width:80px;height:16px"><div class="t" style="left:3px;top:0px;font-size:12px;line-height:16px;color:#000;transform:scaleX(0.880);transform-origin:0 0">1930451687</div></div>
<div class="clip" style="left:390px;top:102px;width:96px;height:16px"><div class="t" style="left:3px;top:0px;font-size:12px;line-height:16px;color:#000;transform:scaleX(0.953);transform-origin:0 0">6gz82dpti0qr7</div></div>
<div class="clip" style="left:487px;top:102px;width:399px;height:16px"><div class="t" style="left:3px;top:0px;font-size:12px;line-height:16px;color:#000;transform:scaleX(0.999);transform-origin:0 0">select l.col#, l.intcol#, l.obj#, l.ind#, l.ts#, l.file#, l.</div></div>
<div class="clip" style="left:887px;top:102px;width:122px;height:16px"><div class="t" style="left:3px;top:0px;font-size:12px;line-height:16px;color:#000;transform:scaleX(1.000);transform-origin:0 0"></div></div>
<div class="clip" style="left:1010px;top:102px;width:77px;height:16px"><div class="t" style="left:3px;top:0px;font-size:12px;line-height:16px;color:#000;transform:scaleX(1.000);transform-origin:0 0"></div></div>
<div class="clip" style="left:1088px;top:102px;width:411px;height:16px"><div class="t" style="left:3px;top:0px;font-size:12px;line-height:16px;color:#000;transform:scaleX(0.880);transform-origin:0 0">SI</div></div>
<div class="b" style="left:118px;top:0px;width:1px;height:110px;background:#b9b9b9"></div>
<div class="b" style="left:197px;top:0px;width:1px;height:110px;background:#b9b9b9"></div>
<div class="b" style="left:308px;top:0px;width:1px;height:110px;background:#b9b9b9"></div>
<div class="b" style="left:389px;top:0px;width:1px;height:110px;background:#b9b9b9"></div>
<div class="b" style="left:486px;top:0px;width:1px;height:110px;background:#b9b9b9"></div>
<div class="b" style="left:886px;top:0px;width:1px;height:110px;background:#b9b9b9"></div>
<div class="b" style="left:1009px;top:0px;width:1px;height:110px;background:#b9b9b9"></div>
<div class="b" style="left:1087px;top:0px;width:1px;height:110px;background:#b9b9b9"></div>
</div>
<div class="b" style="left:332px;top:497px;width:1px;height:16px;background:#a0a0a0"></div>
<div class="b" style="left:411px;top:497px;width:1px;height:16px;background:#a0a0a0"></div>
<div class="b" style="left:522px;top:497px;width:1px;height:16px;background:#a0a0a0"></div>
<div class="b" style="left:603px;top:497px;width:1px;height:16px;background:#a0a0a0"></div>
<div class="b" style="left:700px;top:497px;width:1px;height:16px;background:#a0a0a0"></div>
<div class="b" style="left:1100px;top:497px;width:1px;height:16px;background:#a0a0a0"></div>
<div class="b" style="left:1223px;top:497px;width:1px;height:16px;background:#a0a0a0"></div>
<div class="b" style="left:1301px;top:497px;width:1px;height:16px;background:#a0a0a0"></div>
<div class="t" style="left:232px;top:497px;font-size:12px;line-height:16px;color:#000;transform:scaleX(0.978);transform-origin:0 0;">Saddr</div>
<div class="b" style="left:318px;top:497px;width:13px;height:1px;background:#fff"></div>
<div class="b" style="left:318px;top:497px;width:1px;height:13px;background:#fff"></div>
<div class="b" style="left:318px;top:510px;width:14px;height:1px;background:#a0a0a0"></div>
<div class="b" style="left:331px;top:497px;width:1px;height:14px;background:#a0a0a0"></div>
<div class="b" style="left:229px;top:497px;width:1px;height:15px;background:#fff"></div>
<div class="t" style="left:336px;top:497px;font-size:12px;line-height:16px;color:#000;transform:scaleX(0.986);transform-origin:0 0;">User name</div>
<div class="b" style="left:397px;top:497px;width:13px;height:1px;background:#fff"></div>
<div class="b" style="left:397px;top:497px;width:1px;height:13px;background:#fff"></div>
<div class="b" style="left:397px;top:510px;width:14px;height:1px;background:#a0a0a0"></div>
<div class="b" style="left:410px;top:497px;width:1px;height:14px;background:#a0a0a0"></div>
<div class="b" style="left:333px;top:497px;width:1px;height:15px;background:#fff"></div>
<div class="t" style="left:415px;top:497px;font-size:12px;line-height:16px;color:#000;transform:scaleX(0.986);transform-origin:0 0;">Address</div>
<div class="b" style="left:508px;top:497px;width:13px;height:1px;background:#fff"></div>
<div class="b" style="left:508px;top:497px;width:1px;height:13px;background:#fff"></div>
<div class="b" style="left:508px;top:510px;width:14px;height:1px;background:#a0a0a0"></div>
<div class="b" style="left:521px;top:497px;width:1px;height:14px;background:#a0a0a0"></div>
<div class="b" style="left:412px;top:497px;width:1px;height:15px;background:#fff"></div>
<div class="t" style="left:526px;top:497px;font-size:12px;line-height:16px;color:#000;transform:scaleX(0.986);transform-origin:0 0;">Hash value</div>
<div class="b" style="left:589px;top:497px;width:13px;height:1px;background:#fff"></div>
<div class="b" style="left:589px;top:497px;width:1px;height:13px;background:#fff"></div>
<div class="b" style="left:589px;top:510px;width:14px;height:1px;background:#a0a0a0"></div>
<div class="b" style="left:602px;top:497px;width:1px;height:14px;background:#a0a0a0"></div>
<div class="b" style="left:523px;top:497px;width:1px;height:15px;background:#fff"></div>
<div class="t" style="left:607px;top:497px;font-size:12px;line-height:16px;color:#000;transform:scaleX(0.965);transform-origin:0 0;">Sql id</div>
<div class="b" style="left:686px;top:497px;width:13px;height:1px;background:#fff"></div>
<div class="b" style="left:686px;top:497px;width:1px;height:13px;background:#fff"></div>
<div class="b" style="left:686px;top:510px;width:14px;height:1px;background:#a0a0a0"></div>
<div class="b" style="left:699px;top:497px;width:1px;height:14px;background:#a0a0a0"></div>
<div class="b" style="left:604px;top:497px;width:1px;height:15px;background:#fff"></div>
<div class="t" style="left:704px;top:497px;font-size:12px;line-height:16px;color:#000;transform:scaleX(0.976);transform-origin:0 0;">Sql text</div>
<div class="b" style="left:1086px;top:497px;width:13px;height:1px;background:#fff"></div>
<div class="b" style="left:1086px;top:497px;width:1px;height:13px;background:#fff"></div>
<div class="b" style="left:1086px;top:510px;width:14px;height:1px;background:#a0a0a0"></div>
<div class="b" style="left:1099px;top:497px;width:1px;height:14px;background:#a0a0a0"></div>
<div class="b" style="left:701px;top:497px;width:1px;height:15px;background:#fff"></div>
<div class="t" style="left:1104px;top:497px;font-size:12px;line-height:16px;color:#000;transform:scaleX(0.993);transform-origin:0 0;">Last sql active time</div>
<div class="b" style="left:1209px;top:497px;width:13px;height:1px;background:#fff"></div>
<div class="b" style="left:1209px;top:497px;width:1px;height:13px;background:#fff"></div>
<div class="b" style="left:1209px;top:510px;width:14px;height:1px;background:#a0a0a0"></div>
<div class="b" style="left:1222px;top:497px;width:1px;height:14px;background:#a0a0a0"></div>
<div class="b" style="left:1101px;top:497px;width:1px;height:15px;background:#fff"></div>
<div class="t" style="left:1227px;top:497px;font-size:12px;line-height:16px;color:#000;transform:scaleX(0.982);transform-origin:0 0;">Sql exec id</div>
<div class="b" style="left:1287px;top:497px;width:13px;height:1px;background:#fff"></div>
<div class="b" style="left:1287px;top:497px;width:1px;height:13px;background:#fff"></div>
<div class="b" style="left:1287px;top:510px;width:14px;height:1px;background:#a0a0a0"></div>
<div class="b" style="left:1300px;top:497px;width:1px;height:14px;background:#a0a0a0"></div>
<div class="b" style="left:1224px;top:497px;width:1px;height:15px;background:#fff"></div>
<div class="t" style="left:1305px;top:497px;font-size:12px;line-height:16px;color:#000;transform:scaleX(0.880);transform-origin:0 0;">C</div>
<div class="b" style="left:1302px;top:497px;width:1px;height:15px;background:#fff"></div>
<div class="b" style="left:213px;top:624px;width:1100px;height:1px;background:#f0f0f0"></div>
<div class="b" style="left:213px;top:625px;width:1100px;height:1px;background:#a0a0a0"></div>
<svg style="position:absolute;left:0;top:0;width:1313px;height:627px;overflow:visible" viewBox="0 0 1313 627"><defs>
<pattern id="dy" width="2" height="2" patternUnits="userSpaceOnUse"><rect width="2" height="2" fill="#ffff00"/><rect width="1" height="1" fill="#fff"/><rect x="1" y="1" width="1" height="1" fill="#fff"/></pattern>
<pattern id="dol" width="2" height="2" patternUnits="userSpaceOnUse"><rect width="2" height="2" fill="#808000"/><rect width="1" height="1" fill="#a0a040"/><rect x="1" y="1" width="1" height="1" fill="#a0a040"/></pattern>
<pattern id="dk" width="2" height="2" patternUnits="userSpaceOnUse"><rect width="2" height="2" fill="#ffff00"/><rect width="1" height="1" fill="#808000"/><rect x="1" y="1" width="1" height="1" fill="#808000"/></pattern>
</defs><path d="M14.5 34.5h6l3 3v8h-9z" fill="#fff" stroke="#000" stroke-width="1.4"/><path d="M20 34.5v3.5h3.5" fill="none" stroke="#000"/><path d="M19.5 30v2.5M9.5 40.5h2.5M25.5 40.5h2.5M18.5 47v2.5M10.5 32l2 2M26.5 32l-2 2M10.5 48.5l2-2M26.5 48.5l-2-2" stroke="#000" stroke-width="1.3"/><path d="M30 38h6l-3 3z" fill="#000"/><path d="M44.5 46.5v-9h4l1.5 1.5h5v2.5h-8z" fill="url(#dy)" stroke="#000" stroke-width="1.2"/><path d="M44.5 46.5l3-5h12.5l-4 5z" fill="#808000" stroke="#000" stroke-width="1.2"/><path d="M51.5 36.5c1-3 5-3 6.5-0.5" fill="none" stroke="#000" stroke-width="1.2"/><path d="M56 36h3.5v-3z" fill="#000"/><path d="M63 38h6l-3 3z" fill="#000"/><path d="M77.5 46.5v-7.5h3l1 1h3v6.5z" fill="url(#dy)" stroke="#000" stroke-width="1.2"/><path d="M83.5 33.5h6.5l3 3v9h-9.5z" fill="#fff" stroke="#000" stroke-width="1.2"/><path d="M85 37.5h4M85 39.5h6M85 41.5h6" stroke="#000"/><path d="M78 44.5h12.5l-1.5 2.5h-11z" fill="url(#dy)" stroke="#000" stroke-width="1"/><path d="M96 38h6l-3 3z" fill="#000"/><path d="M117.5 32.5h13v13h-13z" fill="#e4e4e4" stroke="#c0c0c0" stroke-width="1.3"/><path d="M120 33h8v5h-8z" fill="#ececec" stroke="#c0c0c0"/><path d="M120 41h8v4.5h-8z" fill="#b4b4b4"/><path d="M125 42h2v3h-2z" fill="#e8e8e8"/><path d="M140.5 32.5h13v13h-13z" fill="#e4e4e4" stroke="#c0c0c0" stroke-width="1.3"/><path d="M143 33h8v5h-8z" fill="#ececec" stroke="#c0c0c0"/><path d="M143 41h8v4.5h-8z" fill="#b4b4b4"/><path d="M148 42h2v3h-2z" fill="#e8e8e8"/><rect x="146" y="47" width="2" height="2" fill="#b4b4b4"/><rect x="150" y="47" width="2" height="2" fill="#b4b4b4"/><rect x="154" y="47" width="2" height="2" fill="#b4b4b4"/><path d="M168.5 32.5h9v10h-9z" fill="url(#dk)" stroke="#000" stroke-width="1.2"/><path d="M166 35h9v10h-9z" fill="url(#dk)" stroke="#000" stroke-width="1.2"/><path d="M163.5 37.5h10v9.5h-10z" fill="#e0e040" stroke="#000" stroke-width="1.4"/><path d="M165.5 38h6v3.5h-6z" fill="#ddd" stroke="#000" stroke-width=".8"/><path d="M165.5 43.5h6v3.5h-6z" fill="#000"/><rect x="169" y="44" width="1.5" height="2" fill="#fff"/><path d="M194.5 32.5h7l3 3v6h-10z" fill="#ededed" stroke="#c0c0c0" stroke-width="1.2"/><path d="M196 35.5h3M196 37.5h5M196 39.5h5" stroke="#c0c0c0"/><path d="M191.5 41.5h15v5.5h-15z" fill="#e6e6e6" stroke="#c0c0c0" stroke-width="1.2"/><path d="M193 43.5h12" stroke="#fafafa" stroke-dasharray="1.5 .8"/><path d="M222 33l-5.5 5.5" stroke="#000" stroke-width="2.2"/><circle cx="222.5" cy="33.5" r="2" fill="#000"/><circle cx="223" cy="33" r=".7" fill="#f0f0f0"/><path d="M217.5 39.5h11v2h-11z" fill="#fff" stroke="#000"/><path d="M214.5 41.5h16.5v7h-16.5z" fill="#fff" stroke="#000" stroke-width="1.5"/><path d="M216 43.5h12" stroke="#aaa" stroke-dasharray="1.3 .7"/><rect x="228" y="43" width="1.5" height="1.5" fill="#f00"/><path d="M215.5 46.5h14.5" stroke="#bbb" stroke-width="1.5"/><path d="M268 41c2-4 9-5 9.5 0" fill="none" stroke="#c0c0c0" stroke-width="1.6"/><path d="M266 37.5v6.5h6z" fill="#c0c0c0"/><path d="M300 41c-2-4-9-5-9.5 0" fill="none" stroke="#c0c0c0" stroke-width="1.6"/><path d="M302 37.5v6.5h-6z" fill="#c0c0c0"/><path d="M321 33l4.5 9M326 33l-4.5 9" fill="none" stroke="#c0c0c0" stroke-width="1.2"/><circle cx="321" cy="44.5" r="2.2" fill="none" stroke="#c0c0c0" stroke-width="1.2"/><circle cx="326" cy="44.5" r="2.2" fill="none" stroke="#c0c0c0" stroke-width="1.2"/><path d="M339.5 34.5h6l2 2v7h-8z" fill="#f2f2f2" stroke="#c0c0c0" stroke-width="1.2"/><path d="M345.5 38.5h6l2 2v6h-8z" fill="#f2f2f2" stroke="#c0c0c0" stroke-width="1.2"/><path d="M341 37.5h4M341 39.5h4M347 42.5h5M347 44.5h5" stroke="#c0c0c0"/><path d="M361.5 34.5h13v12h-13z" fill="url(#dol)" stroke="#000" stroke-width="1.5"/><path d="M365 33.5h6v3h-6z" fill="#ffff40" stroke="#000" stroke-width=".8"/><path d="M368.5 40.5h7.5v6.5h-7.5z" fill="#fff" stroke="#000080" stroke-width="1.1"/><path d="M370 43h3M370 45h4.5" stroke="#000080" stroke-width="1.1"/><path d="M395 33.5h2v3h1v9h-6v-5zM401 33.5h2v3h1l3 4v5h-6v-9z" fill="#b4b4b4"/><path d="M397 38h4v3h-4z" fill="#b4b4b4"/><rect x="393" y="40" width="1.5" height="2" fill="#e8e8e8"/><rect x="402" y="40" width="1.5" height="2" fill="#e8e8e8"/><path d="M414 33h2v1h1v5h-4v-3zM419 33h2v1l1 2v3h-4v-5z" fill="#b4b4b4"/><path d="M417 36h2v2h-2z" fill="#b4b4b4"/><path d="M416.5 44.5h9" stroke="#b4b4b4" stroke-dasharray="1 1.3"/><path d="M425 42l3.5 2.5-3.5 2.5" fill="none" stroke="#b4b4b4" stroke-width="1.2"/><path d="M444.5 32.5h8l3 3v11.5h-11z" fill="#f2f2f2" stroke="#c0c0c0" stroke-width="1.2"/><path d="M447 36h5M447 38h5M447 43h5M447 45h5" stroke="#c0c0c0"/><path d="M441 40l4-4v2.5h8v3h-8v2.5z" fill="#c0c0c0"/><path d="M464 38h6l-3 3z" fill="#b4b4b4"/><path d="M476.5 32.5h8l3 3v11.5h-11z" fill="#f2f2f2" stroke="#c0c0c0" stroke-width="1.2"/><path d="M478 36h5M478 38h5M478 43h5M478 45h5" stroke="#c0c0c0"/><path d="M491 40l-4-4v2.5h-8v3h8v2.5z" fill="#c0c0c0"/><path d="M496 38h6l-3 3z" fill="#b4b4b4"/><path d="M512.5 32.5h9l2 2v12.5h-11z" fill="#f2f2f2" stroke="#c0c0c0" stroke-width="1.2"/><path d="M514 35h4M516 38h5M516 40h4M514 43h4" stroke="#c0c0c0" stroke-width="1.2"/><path d="M522 42l2 3 4-6" fill="none" stroke="#c0c0c0" stroke-width="1.6"/><path d="M542 34h9M542 37h9M542 40h6M542 43h9M542 46h2" stroke="#b4b4b4" stroke-width="1.4"/><path d="M537 34h3M537 43h3M537 45h3" stroke="#c0c0c0"/><path d="M541.5 32v16" stroke="#c0c0c0" stroke-dasharray="1 2"/><path d="M540 39.5l-3-3v6z" fill="#b4b4b4"/><path d="M535 39.5h3" stroke="#b4b4b4"/><path d="M565 34h9M565 37h9M565 40h6M565 43h9M565 46h2" stroke="#b4b4b4" stroke-width="1.4"/><path d="M560 34h3M560 43h3M560 45h3" stroke="#c0c0c0"/><path d="M564.5 32v16" stroke="#c0c0c0" stroke-dasharray="1 2"/><path d="M558 39.5l3-3v6z" fill="#b4b4b4"/><path d="M560 39.5h4" stroke="#b4b4b4"/><path d="M585.5 32.5h8l3 3v11.5h-11z" fill="#f2f2f2" stroke="#c0c0c0" stroke-width="1.2"/><path d="M587 35.5h4M587 44.5h8" stroke="#c0c0c0"/><path d="M586 38h10v4h-10z" fill="#b4b4b4"/><path d="M581 37l3 3-3 3z" fill="#b4b4b4"/><path d="M608.5 32.5h8l3 3v11.5h-11z" fill="#f2f2f2" stroke="#c0c0c0" stroke-width="1.2"/><path d="M610 35.5h4M610 37.5h8M610 40h8M610 42h8M610 44.5h8" stroke="#c0c0c0"/><path d="M607 37l-3 3 3 3z" fill="#b4b4b4"/><path d="M654.5 32l2 3M657 32.5h3" stroke="#c0c0c0" stroke-width="1.3"/><path d="M657 34.5h8v6.5h-8z" fill="#dedede" stroke="#c0c0c0" stroke-width="1.4"/><path d="M665.5 36l3.5-1v6l-3.5-1z" fill="#dedede" stroke="#c0c0c0" stroke-width="1.2"/><circle cx="666" cy="45.5" r="2.6" fill="#b4b4b4"/><path d="M677.5 32l2 3M680 32.5h3" stroke="#c0c0c0" stroke-width="1.3"/><path d="M680 34.5h8v6.5h-8z" fill="#dedede" stroke="#c0c0c0" stroke-width="1.4"/><path d="M688.5 36l3.5-1v6l-3.5-1z" fill="#dedede" stroke="#c0c0c0" stroke-width="1.2"/><path d="M685 43h1.6v5h-1.6zM688 43l3 2.5-3 2.5z" fill="#b4b4b4"/><path d="M700.5 32l2 3M703 32.5h3" stroke="#000" stroke-width="1.3"/><path d="M703 34.5h8v6.5h-8z" fill="#a0a0a0" stroke="#000" stroke-width="1.4"/><path d="M711.5 36l3.5-1v6l-3.5-1z" fill="#a0a0a0" stroke="#000" stroke-width="1.2"/><rect x="705.5" y="44" width="2" height="2" fill="#000"/><rect x="709.5" y="44" width="2" height="2" fill="#000"/><rect x="713.5" y="44" width="2" height="2" fill="#000"/><path d="M736.6 32.6h11v9.4h-11z" fill="#fff" stroke="#000" stroke-width="1.2"/><path d="M737.2 33.6h9.8" stroke="#000080" stroke-width=".9"/><path d="M739.6 35.6h11v9.4h-11z" fill="#fff" stroke="#000" stroke-width="1.2"/><path d="M740.2 36.6h9.8" stroke="#000080" stroke-width=".9"/><path d="M742.6 38.6h11v9.4h-11z" fill="#fff" stroke="#000" stroke-width="1.2"/><path d="M743.2 39.6h9.8" stroke="#000080" stroke-width=".9"/><path d="M745 41.6h3.5M749.5 41.6h2M745 43.6h6.5" stroke="#000" stroke-width=".9"/><circle cx="748.5" cy="45.5" r=".6" fill="#000"/><circle cx="751.5" cy="45.5" r=".6" fill="#000"/><path d="M759.6 32.6h16v14h-16zM767.6 32.6v14M759.6 39.6h16" fill="#fff" stroke="#000" stroke-width="1.2"/><path d="M760.3 33.7h6.6M768.3 33.7h6.6M760.3 40.7h6.6M768.3 40.7h6.6" stroke="#000080" stroke-width=".9"/><path d="M761.3 35.5h1.6M763.8 35.5h.6M761.3 37.4h.6M763.3 37.4h2M769.3 35.5h2.3M773.3 35.5h.6M769.3 37.4h.6M761.3 42.5h.6M764.8 42.5h.6M761.3 44.4h.6M763.3 44.4h.6M769.3 42.5h.6M771 42.5h1.3M769.3 44.4h2.3M773.3 44.4h.6" stroke="#000" stroke-width="1"/><rect x="796" y="32" width="16" height="16" fill="#f00"/><rect x="799" y="36.5" width="10" height="7" rx="3.5" fill="none" stroke="#fff" stroke-width="1.5"/><path d="M821.5 32.5h9.5l3.5 3.5v11.5h-13z" fill="#e0e0e0" stroke="#000" stroke-width="1.2"/><path d="M819 34h10v3h-10z" fill="#e00" stroke="#000" stroke-width=".6"/><path d="M825 46c2-4 3-7 3-8s-1-1-1 1 2 5 5 5c-2-1-6 0-9 2" fill="none" stroke="#e04040" stroke-width="1"/><circle cx="850" cy="40" r="9" fill="#000080"/><circle cx="850" cy="35" r="1.8" fill="#fff"/><path d="M847 38h4.5v6.5h1.5v2h-6v-2h1.5v-4.5h-1.5z" fill="#fff"/><path d="M19 65l7 7" stroke="#000" stroke-width="4.4" stroke-linecap="round"/><path d="M19 65l7 7" stroke="#e0e020" stroke-width="2.2" stroke-dasharray="1 .7"/><circle cx="16.3" cy="62.6" r="4.4" fill="#e4e428" stroke="#000" stroke-width="1.3"/><circle cx="15.3" cy="61.3" r="1" fill="#fff" stroke="#000" stroke-width=".5"/><path d="M33 64h6l-3 3z" fill="#000"/><circle cx="55.5" cy="66" r="6.5" fill="none" stroke="#c0c0c0" stroke-width="2.6" stroke-dasharray="2.2 1.4"/><circle cx="55.5" cy="66" r="4.3" fill="#eaeaea" stroke="#c0c0c0" stroke-width="1.2"/><circle cx="55.5" cy="66" r="1.6" fill="none" stroke="#c0c0c0"/><path d="M62 61h3M63 64h3M63 67h3M62 70h3" stroke="#c0c0c0" stroke-width="1.6"/><path d="M87 59l-8 5 4 1-9 7 8-4-3-1z" fill="#c0c0c0" stroke="#b4b4b4" stroke-width=".6"/><ellipse cx="109" cy="71" rx="7.5" ry="2.5" fill="#b4b4b4"/><ellipse cx="109" cy="69" rx="7.5" ry="2.5" fill="#c0c0c0"/><ellipse cx="109" cy="67" rx="7.5" ry="2.5" fill="#dcdcdc" stroke="#c0c0c0"/><path d="M106 58h5v5h3l-5.5 5-5.5-5h3z" fill="#c0c0c0" stroke="#e8e8e8" stroke-width=".6"/><ellipse cx="132" cy="71" rx="7.5" ry="2.5" fill="#b4b4b4"/><ellipse cx="132" cy="69" rx="7.5" ry="2.5" fill="#c0c0c0"/><ellipse cx="132" cy="67" rx="7.5" ry="2.5" fill="#dcdcdc" stroke="#c0c0c0"/><path d="M129 68h5v-5h3l-5.5-5-5.5 5h3z" fill="#c0c0c0" stroke="#e8e8e8" stroke-width=".6"/><ellipse cx="163" cy="71" rx="6" ry="2.5" fill="#b4b4b4"/><ellipse cx="163" cy="69" rx="6" ry="2.5" fill="#c0c0c0"/><ellipse cx="163" cy="67" rx="6" ry="2.5" fill="#dcdcdc" stroke="#c0c0c0"/><circle cx="169" cy="61.5" r="4.3" fill="#ececec" stroke="#c0c0c0"/><path d="M167 67h4v5h-4z" fill="#c0c0c0"/><ellipse cx="188" cy="71" rx="7.5" ry="2.5" fill="#b4b4b4"/><ellipse cx="188" cy="69" rx="7.5" ry="2.5" fill="#c0c0c0"/><ellipse cx="188" cy="67" rx="7.5" ry="2.5" fill="#dcdcdc" stroke="#c0c0c0"/><text x="182" y="63" font-size="7" font-weight="bold" font-family="Liberation Sans" fill="#b4b4b4">↱SQL</text><path d="M202 64h6l-3 3z" fill="#b4b4b4"/><ellipse cx="226.5" cy="71.5" rx="8" ry="2.8" fill="#006060" stroke="#000" stroke-width=".8"/><ellipse cx="226.5" cy="69.5" rx="8" ry="2.8" fill="#00a0a0" stroke="#000" stroke-width=".8"/><ellipse cx="226.5" cy="67" rx="8" ry="3" fill="#40e8f0" stroke="#000" stroke-width=".8"/><path d="M219.5 59h2v1.5h1v6h-4v-4zM224.5 59h2v1.5h1v3l1 3h-4v-6z" fill="#000"/><path d="M222.5 61h2v2h-2z" fill="#000"/><ellipse cx="249.5" cy="71.5" rx="8" ry="2.8" fill="#006060" stroke="#000" stroke-width=".8"/><ellipse cx="249.5" cy="69.5" rx="8" ry="2.8" fill="#00a0a0" stroke="#000" stroke-width=".8"/><ellipse cx="249.5" cy="67" rx="8" ry="3" fill="#40e8f0" stroke="#000" stroke-width=".8"/><path d="M243 62l4 4M247 62l-4 4" stroke="#e00" stroke-width="1.8"/><path d="M247 60c1.5-3 6-3.5 8 0" fill="none" stroke="#0000c0" stroke-width="1.4"/><path d="M253.5 59.5l3 1.5-2 2.5z" fill="#0000c0"/><path d="M276.5 66l7.5 6.5M280.5 66l-7.5 6.5" stroke="#000" stroke-width="4.2" stroke-linecap="round"/><path d="M276.5 66l7.5 6.5M280.5 66l-7.5 6.5" stroke="#e0e020" stroke-width="2" stroke-dasharray="1 .7"/><circle cx="275.2" cy="63.2" r="4.1" fill="#e4e428" stroke="#000" stroke-width="1.3"/><circle cx="282.2" cy="63.2" r="4.1" fill="#e4e428" stroke="#000" stroke-width="1.3"/><circle cx="274.4" cy="62.4" r=".9" fill="#fff"/><circle cx="283" cy="62.4" r=".9" fill="#fff"/><path d="M293.5 59.5h15v14h-15z" fill="url(#dy)" stroke="#000" stroke-width="1.4"/><path d="M298 58h6v2.5h-6z" fill="#000"/><path d="M295 64h5M295 70h5" stroke="#808000"/><path d="M300 64l2 2 5-5M300 70l2 2 5-5" fill="none" stroke="#00b000" stroke-width="2"/><path d="M316.5 57.5h8l3 3v13h-11z" fill="#fff" stroke="#7088b0" stroke-width="1"/><path d="M318 61h5M318 63h4M318 65h5M318 67h3" stroke="#4060c0"/><path d="M318 69h3" stroke="#e04040"/><circle cx="326" cy="68" r="5.5" fill="#d8e4f0" stroke="#8090a0" stroke-width="1.2"/><path d="M326 64.5v3.5h3" fill="none" stroke="#203040" stroke-width="1"/><g transform="translate(346.3 59.6)"><path d="M1.9 11.1L7.6 5.4" stroke="#000" stroke-width="3.2" stroke-linecap="round"/><circle cx="9.4" cy="3.7" r="3.6" fill="#000"/><path d="M10 3.4L14 -.2 14.2 4.6z" fill="#f0f0f0"/><circle cx="10.4" cy="3.1" r="1.25" fill="#fff"/><circle cx="2" cy="11" r=".95" fill="#fff"/></g><path d="M379 66l7-4 5 3-7 4z" fill="#c0c0c0" stroke="#c0c0c0"/><path d="M379 68l7-4 5 3-7 4z" fill="#b4b4b4" stroke="#b4b4b4"/><path d="M390 59v5M387.5 61.5h5M388 60l4 3M392 60l-4 3" stroke="#c0c0c0" stroke-width="1"/><path d="M401 66l7-5 9 4-8 6z" fill="#f4f4f4" stroke="#c0c0c0" stroke-width="1.2"/><path d="M401 66v2l8 5 8-6v-2" fill="none" stroke="#c0c0c0" stroke-width="1.2"/><path d="M405 64l8 4" stroke="#c0c0c0"/><path d="M426 65.5L432 71.5L438 67.5v2.5L432 74L426 68z" fill="#303048" stroke="#000" stroke-width=".8"/><path d="M432.5 72.6L437.5 69.2M427 67l5 5" stroke="#8090b0" stroke-width=".7"/><path d="M426 65.5L432 62L438 67.5L432 71.5z" fill="#ff1010" stroke="#000" stroke-width=".9"/><path d="M426 62.5L432 68.5L438 64.5v2.5L432 71L426 65z" fill="#303048" stroke="#000" stroke-width=".8"/><path d="M432.5 69.6L437.5 66.2M427 64l5 5" stroke="#8090b0" stroke-width=".7"/><path d="M426 62.5L432 59L438 64.5L432 68.5z" fill="#ff1010" stroke="#000" stroke-width=".9"/><path d="M448 65.5L454 71.5L460 67.5v2.5L454 74L448 68z" fill="#303048" stroke="#000" stroke-width=".8"/><path d="M454.5 72.6L459.5 69.2M449 67l5 5" stroke="#8090b0" stroke-width=".7"/><path d="M448 65.5L454 62L460 67.5L454 71.5z" fill="#ff1010" stroke="#000" stroke-width=".9"/><path d="M455.5 59.5h3l1 1h3.5v4.5h-7.5z" fill="#ffff00" stroke="#b0a040" stroke-width="1"/><path d="M471 65.5L477 71.5L483 67.5v2.5L477 74L471 68z" fill="#303048" stroke="#000" stroke-width=".8"/><path d="M477.5 72.6L482.5 69.2M472 67l5 5" stroke="#8090b0" stroke-width=".7"/><path d="M471 65.5L477 62L483 67.5L477 71.5z" fill="#ff1010" stroke="#000" stroke-width=".9"/><path d="M479.5 58.5h3v6h-3zM482 60.5h3v6h-3z" fill="#fff" stroke="#000" stroke-width="1.1"/><path d="M494 65.5L500 71.5L506 67.5v2.5L500 74L494 68z" fill="#303048" stroke="#000" stroke-width=".8"/><path d="M500.5 72.6L505.5 69.2M495 67l5 5" stroke="#8090b0" stroke-width=".7"/><path d="M494 65.5L500 62L506 67.5L500 71.5z" fill="#ff1010" stroke="#000" stroke-width=".9"/><path d="M500 67l5.5-5.5" stroke="#000" stroke-width="2.2"/><circle cx="506" cy="60.5" r="2.3" fill="#000"/><circle cx="506.4" cy="60.1" r=".8" fill="#f0f0f0"/><path d="M525.5 62.5h8v-4.5l8.5 8-8.5 8v-4.5h-8z" fill="#1878e8" stroke="#0040a0" stroke-width="1"/><path d="M526.5 63.5h8" stroke="#70b0ff"/><path d="M549 62.5h8v-4.5l8.5 8-8.5 8v-4.5h-8z" fill="#f04030" stroke="#a02010" stroke-width="1"/><path d="M550 63.5h8" stroke="#ffa090"/><path d="M576.5 63.5h11.5v8h-11.5z" fill="#b00000" stroke="#300" stroke-width="1"/><path d="M579.5 61.5h5v2" fill="none" stroke="#000" stroke-width="1.4"/><path d="M571 65.5h6v3.5h-6z" fill="#d00000" stroke="#300" stroke-width=".6"/><path d="M577 67h11" stroke="#300"/><rect x="581" y="66" width="2" height="2" fill="#fff"/><path d="M605.5 65.5h4l1 1h5v6.5h-10z" fill="#c0c0c0" stroke="#b4b4b4" stroke-width="1"/><path d="M605.5 67.5h10" stroke="#d8d8d8"/><path d="M628.5 65.5h4l1 1h5v6.5h-10z" fill="#c0c0c0" stroke="#b4b4b4" stroke-width="1"/><path d="M628.5 67.5h10" stroke="#d8d8d8"/><path d="M651.5 65.5h4l1 1h5v6.5h-10z" fill="#c0c0c0" stroke="#b4b4b4" stroke-width="1"/><path d="M651.5 67.5h10" stroke="#d8d8d8"/><path d="M674.5 65.5h4l1 1h5v6.5h-10z" fill="#c0c0c0" stroke="#b4b4b4" stroke-width="1"/><path d="M674.5 67.5h10" stroke="#d8d8d8"/><path d="M697.5 65.5h4l1 1h5v6.5h-10z" fill="#c0c0c0" stroke="#b4b4b4" stroke-width="1"/><path d="M697.5 67.5h10" stroke="#d8d8d8"/><path d="M720.5 65.5h4l1 1h5v6.5h-10z" fill="#c0c0c0" stroke="#b4b4b4" stroke-width="1"/><path d="M720.5 67.5h10" stroke="#d8d8d8"/><path d="M743.5 65.5h4l1 1h5v6.5h-10z" fill="#c0c0c0" stroke="#b4b4b4" stroke-width="1"/><path d="M743.5 67.5h10" stroke="#d8d8d8"/><path d="M766.5 65.5h4l1 1h5v6.5h-10z" fill="#c0c0c0" stroke="#b4b4b4" stroke-width="1"/><path d="M766.5 67.5h10" stroke="#d8d8d8"/><path d="M789.5 65.5h4l1 1h5v6.5h-10z" fill="#c0c0c0" stroke="#b4b4b4" stroke-width="1"/><path d="M789.5 67.5h10" stroke="#d8d8d8"/><path d="M812.5 65.5h4l1 1h5v6.5h-10z" fill="#c0c0c0" stroke="#b4b4b4" stroke-width="1"/><path d="M812.5 67.5h10" stroke="#d8d8d8"/><path d="M835.5 65.5h4l1 1h5v6.5h-10z" fill="#c0c0c0" stroke="#b4b4b4" stroke-width="1"/><path d="M835.5 67.5h10" stroke="#d8d8d8"/><path d="M858.5 65.5h4l1 1h5v6.5h-10z" fill="#c0c0c0" stroke="#b4b4b4" stroke-width="1"/><path d="M858.5 67.5h10" stroke="#d8d8d8"/><path d="M881.5 65.5h4l1 1h5v6.5h-10z" fill="#c0c0c0" stroke="#b4b4b4" stroke-width="1"/><path d="M881.5 67.5h10" stroke="#d8d8d8"/><path d="M904.5 65.5h4l1 1h5v6.5h-10z" fill="#c0c0c0" stroke="#b4b4b4" stroke-width="1"/><path d="M904.5 67.5h10" stroke="#d8d8d8"/><path d="M927.5 65.5h4l1 1h5v6.5h-10z" fill="#c0c0c0" stroke="#b4b4b4" stroke-width="1"/><path d="M927.5 67.5h10" stroke="#d8d8d8"/><path d="M617 57v3M617 63v3M613 61.5h3M618 61.5h3M614 58.5l2 2M620 58.5l-2 2M614 64.5l2-2M620 64.5l-2-2" stroke="#c0c0c0" stroke-width="1"/><path d="M639 58l4 3.5-4 3.5z" fill="#c0c0c0"/><path d="M666 58l-4 3.5 4 3.5z" fill="#c0c0c0"/><path d="M676 62c0-4 6-4 7-1" fill="none" stroke="#c0c0c0" stroke-width="1.3"/><path d="M675 60v3h3z" fill="#c0c0c0"/><path d="M684 58l4 3.5-4 3.5z" fill="#c0c0c0"/><path d="M708 58l4 3.5-4 3.5z" fill="#c0c0c0"/><path d="M732 57l4 4-4 4-4-4z" fill="#e0e0e0" stroke="#c0c0c0" stroke-width="1.2"/><path d="M750 59h8v3h-8z" fill="#c0c0c0"/><path d="M776 56.5l5.5 5.5-5.5 5.5-5.5-5.5z" fill="#c0c0c0"/><path d="M776 59v1M776 61v4" stroke="#fff" stroke-width="1.3"/><circle cx="800" cy="60" r="3.2" fill="none" stroke="#c0c0c0" stroke-width="1.5"/><path d="M802 62.5l3 3" stroke="#c0c0c0" stroke-width="1.8"/><path d="M818 59.5h1M820 59.5h1M822 59.5h1M824 59.5h1M826 59.5h1M817 61.5h11" stroke="#c0c0c0" stroke-width="1.2"/><path d="M845 58l4 3.5-4 3.5z" fill="#c0c0c0"/><rect x="843" y="72" width="2" height="2" fill="#b4b4b4"/><rect x="846" y="72" width="2" height="2" fill="#b4b4b4"/><rect x="849" y="72" width="2" height="2" fill="#b4b4b4"/><path d="M872 58l-4 3.5 4 3.5z" fill="#c0c0c0"/><rect x="866" y="72" width="2" height="2" fill="#b4b4b4"/><rect x="869" y="72" width="2" height="2" fill="#b4b4b4"/><rect x="872" y="72" width="2" height="2" fill="#b4b4b4"/><path d="M883 62c0-4 6-4 7-1" fill="none" stroke="#c0c0c0" stroke-width="1.3"/><path d="M882 60v3h3z" fill="#c0c0c0"/><path d="M891 58l4 3.5-4 3.5z" fill="#c0c0c0"/><rect x="889" y="72" width="2" height="2" fill="#b4b4b4"/><rect x="892" y="72" width="2" height="2" fill="#b4b4b4"/><rect x="895" y="72" width="2" height="2" fill="#b4b4b4"/><path d="M914 58l4 3.5-4 3.5z" fill="#c0c0c0"/><rect x="912" y="72" width="2" height="2" fill="#b4b4b4"/><rect x="915" y="72" width="2" height="2" fill="#b4b4b4"/><rect x="918" y="72" width="2" height="2" fill="#b4b4b4"/><path d="M939 57l4 4-4 4-4-4z" fill="#e0e0e0" stroke="#c0c0c0" stroke-width="1.2"/><rect x="935" y="72" width="2" height="2" fill="#b4b4b4"/><rect x="938" y="72" width="2" height="2" fill="#b4b4b4"/><rect x="941" y="72" width="2" height="2" fill="#b4b4b4"/><path d="M951.5 61.5h8v-4l6 8-6 8v-4h-8z" fill="#e0e0e0" stroke="#c0c0c0" stroke-width="1.2"/><path d="M974.5 65.5h3l.8 1h5.2v6.2h-9z" fill="#e06818" stroke="#000" stroke-width="1.1"/><path d="M975 66h2.5v1.2H975z" fill="#30d030"/><path d="M982 60l5.5 5.5" stroke="#000" stroke-width="2"/><circle cx="982" cy="59.5" r="2.2" fill="#000"/><circle cx="981.6" cy="59.2" r=".8" fill="#f0f0f0"/><circle cx="987.3" cy="65.3" r=".5" fill="#fff"/><path d="M219.5 95c0-5 8.5-6 8 0v3" fill="none" stroke="#000" stroke-width="2.2"/><path d="M224 96h7l-3.5 3.5z" fill="#000"/><path d="M249 91a4.5 4.5 0 1 0 1.5 4" fill="none" stroke="#000" stroke-width="2.2"/><path d="M247 89v6l4.5-3z" fill="#10a010"/><path d="M270 92l9 9" stroke="#000" stroke-width="4"/><path d="M270 92l9 9" stroke="#e0e040" stroke-width="2" stroke-dasharray="1 .6"/><circle cx="269.5" cy="91" r="4.3" fill="#e8e850" stroke="#000" stroke-width="1.2"/><circle cx="268.5" cy="90" r="1" fill="#fff"/><path d="M280 88l-6 6 3 1-11 6 7-7-3-1z" fill="#f00" stroke="#c00" stroke-width=".6"/><circle cx="295" cy="94" r="6" fill="#fff" stroke="#000" stroke-width="1.6"/><path d="M293 86.5h4M295 86.5v1.5M289.5 88.5l1.5 1.5" stroke="#000" stroke-width="1.3"/><path d="M295 89v5" stroke="#e00" stroke-width="1.2"/><path d="M291 94h1M298 94h1M295 98v1" stroke="#000"/><path d="M297.5 90h6M300.5 87v6" stroke="#00c000" stroke-width="2.4"/><circle cx="318" cy="94" r="6" fill="#fff" stroke="#000" stroke-width="1.6"/><path d="M316 86.5h4M318 86.5v1.5M312.5 88.5l1.5 1.5" stroke="#000" stroke-width="1.3"/><path d="M318 89v5" stroke="#e00" stroke-width="1.2"/><path d="M314 94h1M321 94h1M318 98v1" stroke="#000"/><path d="M320.5 90h6" stroke="#e00" stroke-width="2.4"/><g transform="translate(336.8 86.9)"><path d="M1.9 11.1L7.6 5.4" stroke="#000" stroke-width="3.2" stroke-linecap="round"/><circle cx="9.4" cy="3.7" r="3.6" fill="#000"/><path d="M10 3.4L14 -.2 14.2 4.6z" fill="#f0f0f0"/><circle cx="10.4" cy="3.1" r="1.25" fill="#fff"/><circle cx="2" cy="11" r=".95" fill="#fff"/></g><g transform="translate(7 107.3)"><path d="M8.3 3.2A4.2 4.2 0 1 0 5.2 10.4" fill="none" stroke="#000" stroke-width="2.3"/><path d="M6.2 0.8L10.8 0.2 10.4 4.6z" fill="#000"/></g><g transform="translate(24.5 107.8)"><path d="M3.5 .5h2.5v3h3v2.5h-3v3H3.5v-3h-3V3.5h3z" fill="#fff" stroke="#000" stroke-width="1.2"/></g><g transform="translate(43 110.8)"><path d="M.6 .6h9.3v2.8H.6z" fill="#fff" stroke="#000" stroke-width="1.2"/></g><g transform="translate(61 107.3)"><path d="M1.2 7.8L7 2" stroke="#000" stroke-width="3.2" stroke-linecap="round"/><path d="M1.2 7.8L7 2" stroke="#fff" stroke-width="1" stroke-linecap="round"/><circle cx="7.3" cy="1.8" r="1.6" fill="#000"/><path d="M5.5 6.5h3l1 1h2.5v4h-6.5z" fill="#a8a8a8" stroke="#000" stroke-width="1.2"/></g><g transform="translate(7 299.5)"><path d="M8.3 3.2A4.2 4.2 0 1 0 5.2 10.4" fill="none" stroke="#000" stroke-width="2.3"/><path d="M6.2 0.8L10.8 0.2 10.4 4.6z" fill="#000"/></g><g transform="translate(24.5 300.0)"><path d="M3.5 .5h2.5v3h3v2.5h-3v3H3.5v-3h-3V3.5h3z" fill="#fff" stroke="#000" stroke-width="1.2"/></g><g transform="translate(43 302.5)"><path d="M.6 .6h9.3v2.8H.6z" fill="#fff" stroke="#000" stroke-width="1.2"/></g><g transform="translate(60.2 299.5)"><path d="M1 0.5h2.5v3h1v7.5H.3V6zM7 0.5h2.5V6l.7 5H6v-7.5h1z" fill="#000"/><path d="M4 4.5h2.5v3H4z" fill="#000"/><path d="M1.3 7.5h1.2M7.7 7.5h1.2" stroke="#fff"/></g><g transform="translate(79 299.5)"><path d="M1.2 7.8L7 2" stroke="#000" stroke-width="3.2" stroke-linecap="round"/><path d="M1.2 7.8L7 2" stroke="#fff" stroke-width="1" stroke-linecap="round"/><circle cx="7.3" cy="1.8" r="1.6" fill="#000"/><path d="M4.5 5h7.5l-3 3.2v3.8h-1.5V8.2z" fill="#000"/><path d="M6 6h1M8 6h1M10 6h1" stroke="#888" stroke-width=".8"/></g><g transform="translate(97 299.5)"><path d="M1.2 7.8L7 2" stroke="#000" stroke-width="3.2" stroke-linecap="round"/><path d="M1.2 7.8L7 2" stroke="#fff" stroke-width="1" stroke-linecap="round"/><circle cx="7.3" cy="1.8" r="1.6" fill="#000"/><path d="M5.5 6.5h3l1 1h2.5v4h-6.5z" fill="#a8a8a8" stroke="#000" stroke-width="1.2"/></g></svg>
</body></html>
